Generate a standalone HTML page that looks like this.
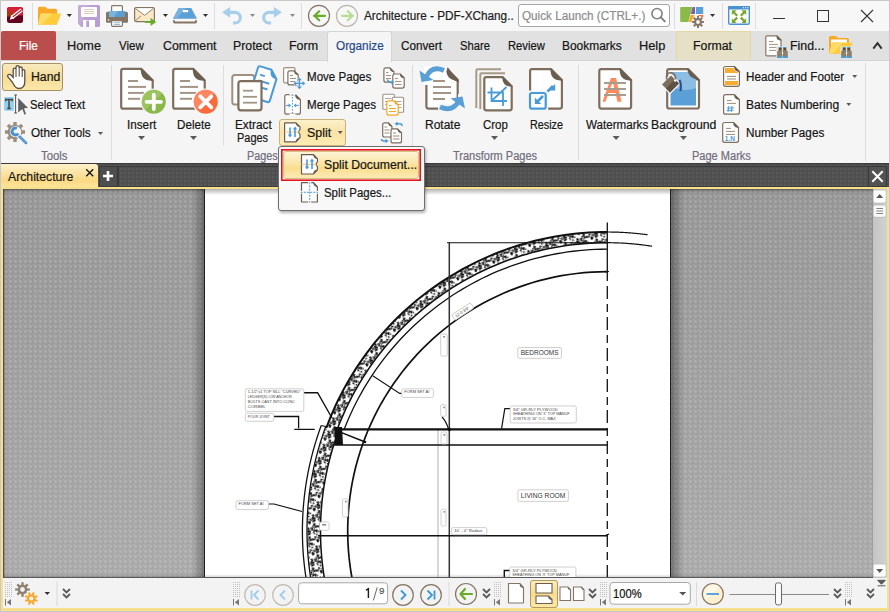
<!DOCTYPE html>
<html><head><meta charset="utf-8">
<style>
*{margin:0;padding:0;box-sizing:border-box}
html,body{width:890px;height:612px;overflow:hidden;background:#f7f7f7}
body{position:relative;font-family:"Liberation Sans",sans-serif;font-size:12px;color:#151515}
.a{position:absolute}
.t{position:absolute;white-space:nowrap;transform-origin:0 0;-webkit-text-stroke:0.2px currentColor}
svg{position:absolute;overflow:visible}
</style></head><body>
<!-- window frame -->
<div class="a" style="left:0;top:0;width:890px;height:612px;border:1px solid #c9c9c9"></div>
<!-- title bar -->
<div class="a" style="left:1px;top:1px;width:888px;height:30px;background:#f7f7f7"></div>
<div class="a" style="left:32px;top:3px;width:1px;height:26px;background:#dedede"></div>
<div class="a" style="left:214px;top:3px;width:1px;height:26px;background:#dedede"></div>
<div class="a" style="left:301px;top:3px;width:1px;height:26px;background:#dedede"></div>
<div class="a" style="left:674px;top:3px;width:1px;height:26px;background:#dedede"></div>
<div class="a" style="left:722px;top:3px;width:1px;height:26px;background:#dedede"></div>
<div class="a" style="left:755px;top:3px;width:1px;height:26px;background:#dedede"></div>
<div class="a" style="left:518px;top:4px;width:152px;height:23px;border:1px solid #a6a6a6;border-radius:3px;background:#fff"></div>
<!-- ribbon tab strip -->
<div class="a" style="left:1px;top:31px;width:888px;height:30px;background:#e1e1e1"></div>
<div class="a" style="left:1px;top:31px;width:55px;height:29px;background:#b94e4c;border-radius:2px 2px 0 0"></div>
<div class="a" style="left:676px;top:31px;width:75px;height:30px;background:#e6e0c6;border:1px solid #e3d7a2;border-bottom:none"></div>
<!-- ribbon body -->
<div class="a" style="left:1px;top:60px;width:888px;height:103px;background:#f5f5f5;border-top:1px solid #d4d4d4"></div>
<div class="a" style="left:327px;top:31px;width:65px;height:31px;background:#f5f5f5;border:1px solid #d4d4d4;border-bottom:none;border-radius:3px 3px 0 0"></div>
<div class="a" style="left:111px;top:65px;width:1px;height:95px;background:#dcdcdc"></div>
<div class="a" style="left:223px;top:65px;width:1px;height:80px;background:#dcdcdc"></div>
<div class="a" style="left:412px;top:65px;width:1px;height:95px;background:#dcdcdc"></div>
<div class="a" style="left:578px;top:65px;width:1px;height:95px;background:#dcdcdc"></div>
<div class="a" style="left:865px;top:63px;width:1px;height:98px;background:#dcdcdc"></div>
<!-- buttons highlighted -->
<div class="a" style="left:2px;top:63px;width:61px;height:28px;border:1px solid #a89060;border-radius:3px;background:linear-gradient(#f8ebc0,#f5dc98 50%,#fbe7a8)"></div>
<div class="a" style="left:279px;top:119px;width:67px;height:27px;border:1px solid #c9b278;border-radius:3px;background:linear-gradient(#fcf1cc,#f9e3a6 50%,#fdecb4)"></div>
<!-- doc tab bar -->
<div class="a" style="left:1px;top:163px;width:888px;height:24px;background-color:#4b4b4b;background-image:radial-gradient(circle at 50% 50%, #555 0, #555 0.8px, transparent 1.8px);background-size:4px 4px;border-top:1px solid #3c3c3c"></div>
<div class="a" style="left:99px;top:166px;width:19px;height:21px;border:1px solid #3a3a3a;background:#4e4e4e"></div>
<div class="a" style="left:118px;top:166px;width:750px;height:21px;border:1px solid #3c3c3c;border-right:none;background-color:#4e4e4e;background-image:radial-gradient(circle at 50% 50%, #585858 0, #585858 0.8px, transparent 1.8px);background-size:4px 4px"></div>
<div class="a" style="left:868px;top:166px;width:19px;height:21px;border:1px solid #3a3a3a;background:#525252"></div>
<div class="a" style="left:1px;top:164px;width:97px;height:25px;border-radius:0 3px 0 0;background:linear-gradient(#fdf1cb,#fbe09a 45%,#fcd983 65%,#fde7a0)"></div>
<!-- yellow frame -->
<div class="a" style="left:1px;top:187px;width:888px;height:2px;background:#f6e08c"></div>
<div class="a" style="left:1px;top:187px;width:2px;height:424px;background:#f6e08c"></div>
<div class="a" style="left:887px;top:187px;width:2px;height:424px;background:#f6e08c"></div>
<div class="a" style="left:1px;top:608px;width:888px;height:3px;background:#f6e08c"></div>
<!-- status bar -->
<div class="a" style="left:3px;top:578px;width:884px;height:30px;background:#f3f3f3"></div>

<div class="a" style="left:3px;top:189px;width:870px;height:389px;background-image:linear-gradient(rgba(0,0,0,.25),transparent 4px),radial-gradient(circle at 50% 50%, rgba(255,255,255,.16) 0, rgba(255,255,255,.16) 1.1px, transparent 2.1px),radial-gradient(circle at 0 0, rgba(255,255,255,.14) 0, rgba(255,255,255,.14) 1.1px, transparent 2.1px),linear-gradient(#939393,#a8a8a8);background-size:100% 100%,5px 5px,5px 5px,100% 100%;box-shadow:inset 1px 0 2px #333"></div>
<div class="a" style="left:192px;top:189px;width:492px;height:389px;background:linear-gradient(90deg,transparent,rgba(0,0,0,.3) 12px,rgba(0,0,0,.3) calc(100% - 12px),transparent)"></div>
<div class="a" style="left:204px;top:189px;width:467px;height:389px;background:#fff;border-left:1px solid #1e1e1e;border-right:1px solid #1e1e1e"></div>
<div class="a" style="left:205px;top:189px;width:465px;height:6px;background:linear-gradient(rgba(0,0,0,.3),transparent)"></div>
<div class="a" style="left:873px;top:189px;width:14px;height:389px;background:linear-gradient(90deg,#c4c4c4,#d2d2d2)"></div>
<div class="a" style="left:3px;top:574px;width:870px;height:3px;background:linear-gradient(transparent,rgba(0,0,0,.15))"></div>
<div class="a" style="left:3px;top:577px;width:870px;height:1px;background:#5a5a5a"></div>

<svg style="left:0;top:0" width="890" height="612" viewBox="0 0 890 612">
<defs><pattern id="hatch" width="14" height="14" patternUnits="userSpaceOnUse" patternTransform="rotate(20)"><g fill="#111"><rect x="3.3" y="7.6" width="1.7" height="1.3" transform="rotate(113 3.3 7.6)"/><rect x="0.9" y="0.2" width="2.7" height="1.0" transform="rotate(42 0.9 0.2)"/><rect x="13.9" y="6.6" width="2.7" height="1.2" transform="rotate(115 13.9 6.6)"/><rect x="2.1" y="8.9" width="2.7" height="1.3" transform="rotate(133 2.1 8.9)"/><rect x="9.4" y="0.9" width="2.5" height="1.3" transform="rotate(54 9.4 0.9)"/><rect x="0.4" y="12.1" width="1.9" height="1.4" transform="rotate(158 0.4 12.1)"/><rect x="10.0" y="12.9" width="1.8" height="1.5" transform="rotate(80 10.0 12.9)"/><rect x="13.1" y="12.3" width="1.2" height="0.9" transform="rotate(39 13.1 12.3)"/><rect x="13.5" y="6.1" width="2.3" height="1.1" transform="rotate(91 13.5 6.1)"/><rect x="5.4" y="4.9" width="2.2" height="1.3" transform="rotate(163 5.4 4.9)"/><rect x="9.5" y="13.0" width="2.7" height="1.7" transform="rotate(121 9.5 13.0)"/><rect x="2.3" y="12.0" width="2.9" height="1.6" transform="rotate(102 2.3 12.0)"/><rect x="10.0" y="3.0" width="2.7" height="1.3" transform="rotate(51 10.0 3.0)"/><rect x="0.9" y="12.0" width="3.0" height="0.9" transform="rotate(144 0.9 12.0)"/><rect x="5.7" y="2.1" width="1.6" height="1.5" transform="rotate(157 5.7 2.1)"/><rect x="0.6" y="8.6" width="1.1" height="1.4" transform="rotate(60 0.6 8.6)"/><rect x="12.3" y="13.7" width="2.0" height="1.7" transform="rotate(56 12.3 13.7)"/><rect x="1.1" y="8.4" width="1.1" height="1.0" transform="rotate(73 1.1 8.4)"/><rect x="8.5" y="2.2" width="1.1" height="1.6" transform="rotate(56 8.5 2.2)"/><rect x="13.4" y="12.6" width="1.8" height="1.2" transform="rotate(94 13.4 12.6)"/><rect x="9.0" y="8.3" width="2.1" height="1.4" transform="rotate(169 9.0 8.3)"/><rect x="7.1" y="6.0" width="2.4" height="1.0" transform="rotate(54 7.1 6.0)"/><rect x="13.7" y="7.3" width="2.1" height="0.8" transform="rotate(75 13.7 7.3)"/><rect x="8.1" y="0.3" width="2.2" height="1.4" transform="rotate(11 8.1 0.3)"/><rect x="8.8" y="6.5" width="2.4" height="1.1" transform="rotate(127 8.8 6.5)"/><rect x="10.3" y="0.3" width="1.1" height="1.4" transform="rotate(173 10.3 0.3)"/><rect x="3.5" y="6.4" width="2.2" height="1.1" transform="rotate(66 3.5 6.4)"/><rect x="4.4" y="5.2" width="2.2" height="1.1" transform="rotate(68 4.4 5.2)"/><rect x="10.8" y="0.4" width="2.1" height="1.5" transform="rotate(56 10.8 0.4)"/><rect x="3.1" y="11.3" width="1.5" height="1.0" transform="rotate(78 3.1 11.3)"/><rect x="9.8" y="1.4" width="1.6" height="1.1" transform="rotate(150 9.8 1.4)"/><rect x="6.1" y="12.0" width="1.3" height="1.1" transform="rotate(117 6.1 12.0)"/><rect x="12.4" y="6.3" width="1.5" height="0.9" transform="rotate(95 12.4 6.3)"/><rect x="2.7" y="11.3" width="2.7" height="1.0" transform="rotate(50 2.7 11.3)"/><rect x="11.3" y="9.0" width="2.6" height="1.1" transform="rotate(23 11.3 9.0)"/><rect x="4.1" y="11.1" width="1.5" height="1.1" transform="rotate(75 4.1 11.1)"/><rect x="5.9" y="5.7" width="2.8" height="0.9" transform="rotate(1 5.9 5.7)"/><rect x="13.2" y="12.3" width="3.0" height="1.2" transform="rotate(171 13.2 12.3)"/><rect x="13.0" y="3.1" width="2.5" height="1.6" transform="rotate(119 13.0 3.1)"/><rect x="7.3" y="4.0" width="1.7" height="1.0" transform="rotate(12 7.3 4.0)"/><rect x="8.2" y="4.0" width="2.6" height="0.8" transform="rotate(163 8.2 4.0)"/><rect x="9.7" y="12.9" width="2.8" height="1.6" transform="rotate(104 9.7 12.9)"/><rect x="0.2" y="10.4" width="1.3" height="1.1" transform="rotate(119 0.2 10.4)"/><rect x="7.3" y="5.8" width="2.9" height="1.4" transform="rotate(61 7.3 5.8)"/><rect x="3.5" y="12.1" width="2.0" height="1.5" transform="rotate(63 3.5 12.1)"/><rect x="2.8" y="7.5" width="2.6" height="1.0" transform="rotate(143 2.8 7.5)"/><rect x="12.9" y="11.3" width="2.6" height="0.8" transform="rotate(113 12.9 11.3)"/><rect x="12.1" y="0.7" width="1.5" height="1.0" transform="rotate(95 12.1 0.7)"/><rect x="5.9" y="6.6" width="2.6" height="0.8" transform="rotate(10 5.9 6.6)"/><rect x="1.8" y="1.7" width="1.1" height="1.7" transform="rotate(154 1.8 1.7)"/></g></pattern></defs>
<defs><clipPath id="pg"><rect x="205" y="189" width="465" height="388"/></clipPath></defs>
<g clip-path="url(#pg)" fill="none" stroke="#111">
<path d="M607.00,232.00 L600.93,232.06 L594.85,232.25 L588.79,232.56 L582.73,232.99 L576.68,233.54 L570.64,234.22 L564.62,235.02 L558.61,235.94 L552.63,236.99 L546.66,238.15 L540.73,239.44 L534.82,240.84 L528.94,242.37 L523.09,244.02 L517.28,245.78 L511.50,247.66 L505.76,249.66 L500.07,251.78 L494.42,254.01 L488.81,256.35 L483.26,258.81 L477.75,261.38 L472.30,264.06 L466.90,266.85 L461.57,269.75 L456.29,272.76 L451.07,275.88 L445.92,279.10 L440.84,282.42 L435.82,285.85 L430.88,289.38 L426.00,293.01 L421.21,296.73 L416.48,300.56 L411.84,304.47 L407.28,308.49 L402.80,312.59 L398.40,316.78 L394.10,321.07 L389.87,325.43 L385.74,329.89 L381.70,334.42 L377.75,339.04 L373.90,343.74 L370.15,348.51 L366.49,353.36 L362.93,358.29 L359.47,363.28 L356.11,368.35 L352.86,373.48 L349.71,378.67 L346.67,383.93 L343.74,389.25 L340.91,394.63 L338.19,400.06 L335.59,405.55 L333.10,411.09 L330.72,416.68 L328.45,422.32 L326.30,428.00 L336.35,431.69 L338.42,426.21 L340.60,420.77 L342.90,415.38 L345.30,410.04 L347.81,404.75 L350.43,399.51 L353.16,394.32 L355.99,389.19 L358.92,384.12 L361.95,379.11 L365.09,374.17 L368.33,369.28 L371.66,364.47 L375.09,359.72 L378.62,355.04 L382.24,350.44 L385.96,345.91 L389.76,341.46 L393.66,337.08 L397.64,332.79 L401.71,328.58 L405.87,324.45 L410.11,320.41 L414.43,316.45 L418.83,312.58 L423.30,308.80 L427.85,305.12 L432.48,301.52 L437.18,298.02 L441.95,294.62 L446.78,291.32 L451.69,288.11 L456.65,285.01 L461.68,282.00 L466.77,279.10 L471.92,276.30 L477.12,273.61 L482.38,271.03 L487.68,268.55 L493.04,266.18 L498.45,263.92 L503.89,261.77 L509.39,259.73 L514.92,257.80 L520.49,255.99 L526.09,254.29 L531.73,252.70 L537.40,251.23 L543.10,249.87 L548.82,248.63 L554.57,247.51 L560.34,246.50 L566.13,245.61 L571.94,244.84 L577.76,244.19 L583.59,243.65 L589.44,243.24 L595.29,242.94 L601.14,242.76 L607.00,242.70 Z" fill="#fff" stroke="none"/>
<path d="M326.35,425.00 L325.41,427.53 L324.49,430.06 L323.60,432.60 L322.72,435.15 L321.87,437.71 L321.05,440.28 L320.24,442.85 L319.46,445.43 L318.71,448.02 L317.97,450.61 L317.26,453.21 L316.57,455.82 L315.91,458.43 L315.27,461.05 L314.65,463.67 L314.06,466.30 L313.49,468.94 L312.94,471.58 L312.42,474.22 L311.92,476.87 L311.45,479.52 L311.00,482.18 L310.57,484.84 L310.17,487.51 L309.79,490.18 L309.44,492.85 L309.10,495.52 L308.80,498.20 L308.52,500.88 L308.26,503.57 L308.02,506.25 L307.81,508.94 L307.63,511.63 L307.46,514.32 L307.33,517.01 L307.21,519.70 L307.12,522.40 L307.06,525.09 L307.02,527.79 L307.00,530.48 L307.01,533.18 L307.04,535.88 L307.10,538.57 L307.18,541.26 L307.28,543.96 L307.41,546.65 L307.56,549.34 L307.74,552.03 L307.94,554.72 L308.16,557.41 L308.41,560.09 L308.69,562.77 L308.98,565.45 L309.31,568.13 L309.65,570.80 L310.02,573.47 L310.42,576.14 L310.83,578.80 L311.27,581.46 L311.74,584.11 L325.03,581.72 L324.58,579.19 L324.16,576.65 L323.76,574.11 L323.39,571.56 L323.03,569.01 L322.70,566.46 L322.40,563.90 L322.11,561.34 L321.85,558.78 L321.61,556.22 L321.40,553.65 L321.20,551.09 L321.04,548.52 L320.89,545.95 L320.77,543.38 L320.67,540.80 L320.59,538.23 L320.54,535.66 L320.51,533.08 L320.50,530.51 L320.52,527.93 L320.56,525.36 L320.62,522.79 L320.70,520.21 L320.81,517.64 L320.94,515.07 L321.10,512.50 L321.28,509.93 L321.48,507.37 L321.70,504.80 L321.95,502.24 L322.22,499.68 L322.51,497.12 L322.83,494.57 L323.16,492.01 L323.53,489.47 L323.91,486.92 L324.32,484.38 L324.75,481.84 L325.20,479.31 L325.68,476.78 L326.18,474.25 L326.70,471.73 L327.24,469.21 L327.81,466.70 L328.40,464.20 L329.01,461.70 L329.64,459.20 L330.30,456.71 L330.98,454.23 L331.68,451.75 L332.40,449.28 L333.15,446.82 L333.91,444.36 L334.70,441.91 L335.52,439.47 L336.35,437.03 L337.20,434.60 L338.08,432.18 L338.98,429.77 Z" fill="#fff" stroke="none"/>
<path d="M607.00,232.50 L600.94,232.56 L594.87,232.75 L588.82,233.05 L582.77,233.49 L576.73,234.04 L570.70,234.72 L564.69,235.51 L558.69,236.43 L552.72,237.48 L546.77,238.64 L540.84,239.92 L534.94,241.33 L529.07,242.85 L523.23,244.50 L517.43,246.26 L511.66,248.14 L505.93,250.13 L500.25,252.24 L494.60,254.47 L489.01,256.81 L483.46,259.26 L477.97,261.83 L472.53,264.51 L467.14,267.29 L461.81,270.19 L456.54,273.19 L451.33,276.30 L446.19,279.52 L441.12,282.84 L436.11,286.26 L431.17,289.78 L426.31,293.40 L421.52,297.12 L416.80,300.94 L412.17,304.85 L407.61,308.86 L403.14,312.95 L398.75,317.14 L394.45,321.42 L390.24,325.78 L386.11,330.22 L382.08,334.75 L378.14,339.36 L374.29,344.05 L370.54,348.82 L366.89,353.66 L363.34,358.58 L359.88,363.56 L356.53,368.62 L353.28,373.74 L350.14,378.93 L347.11,384.18 L344.18,389.49 L341.35,394.86 L338.64,400.28 L336.04,405.76 L333.55,411.29 L331.18,416.87 L328.92,422.50 L326.77,428.17 L335.69,431.44 L337.77,425.95 L339.96,420.50 L342.26,415.10 L344.67,409.75 L347.18,404.44 L349.81,399.19 L352.54,393.99 L355.38,388.85 L358.32,383.77 L361.36,378.74 L364.50,373.79 L367.75,368.89 L371.09,364.06 L374.53,359.31 L378.07,354.62 L381.70,350.00 L385.42,345.46 L389.24,341.00 L393.14,336.61 L397.14,332.31 L401.22,328.09 L405.38,323.95 L409.63,319.89 L413.96,315.93 L418.37,312.05 L422.86,308.26 L427.42,304.57 L432.06,300.97 L436.77,297.46 L441.55,294.05 L446.40,290.74 L451.31,287.52 L456.29,284.41 L461.33,281.40 L466.43,278.49 L471.59,275.69 L476.81,272.99 L482.07,270.40 L487.39,267.91 L492.76,265.54 L498.18,263.27 L503.64,261.11 L509.15,259.07 L514.69,257.14 L520.28,255.32 L525.90,253.61 L531.55,252.02 L537.23,250.55 L542.94,249.19 L548.68,247.95 L554.45,246.82 L560.23,245.81 L566.03,244.92 L571.85,244.14 L577.69,243.49 L583.54,242.95 L589.39,242.54 L595.26,242.24 L601.13,242.06 L607.00,242.00 Z" fill="url(#hatch)" stroke="none"/>
<path d="M326.82,425.18 L325.88,427.70 L324.96,430.23 L324.07,432.77 L323.20,435.31 L322.35,437.87 L321.52,440.43 L320.72,443.00 L319.94,445.57 L319.19,448.16 L318.45,450.74 L317.74,453.34 L317.06,455.94 L316.39,458.55 L315.76,461.17 L315.14,463.78 L314.55,466.41 L313.98,469.04 L313.43,471.68 L312.91,474.32 L312.42,476.96 L311.94,479.61 L311.49,482.26 L311.07,484.92 L310.66,487.58 L310.29,490.25 L309.93,492.91 L309.60,495.58 L309.30,498.26 L309.01,500.93 L308.75,503.61 L308.52,506.29 L308.31,508.98 L308.13,511.66 L307.96,514.35 L307.83,517.03 L307.71,519.72 L307.62,522.41 L307.56,525.10 L307.52,527.79 L307.50,530.49 L307.51,533.18 L307.54,535.87 L307.60,538.56 L307.68,541.25 L307.78,543.94 L307.91,546.62 L308.06,549.31 L308.24,552.00 L308.44,554.68 L308.66,557.36 L308.91,560.04 L309.18,562.72 L309.48,565.39 L309.80,568.07 L310.15,570.73 L310.52,573.40 L310.91,576.06 L311.33,578.72 L311.77,581.38 L312.23,584.03 L324.53,581.81 L324.09,579.27 L323.67,576.73 L323.27,574.18 L322.89,571.63 L322.54,569.08 L322.21,566.52 L321.90,563.96 L321.61,561.39 L321.35,558.83 L321.11,556.26 L320.90,553.69 L320.71,551.12 L320.54,548.55 L320.39,545.97 L320.27,543.40 L320.17,540.82 L320.09,538.24 L320.04,535.66 L320.01,533.09 L320.00,530.51 L320.02,527.93 L320.06,525.35 L320.12,522.77 L320.20,520.19 L320.31,517.62 L320.44,515.04 L320.60,512.47 L320.78,509.90 L320.98,507.32 L321.20,504.76 L321.45,502.19 L321.72,499.62 L322.01,497.06 L322.33,494.50 L322.67,491.95 L323.03,489.39 L323.42,486.84 L323.83,484.30 L324.26,481.75 L324.71,479.22 L325.19,476.68 L325.69,474.15 L326.21,471.63 L326.75,469.11 L327.32,466.59 L327.91,464.08 L328.52,461.57 L329.16,459.08 L329.82,456.58 L330.50,454.09 L331.20,451.61 L331.92,449.14 L332.67,446.67 L333.44,444.21 L334.23,441.75 L335.04,439.31 L335.88,436.87 L336.73,434.43 L337.61,432.01 L338.51,429.59 Z" fill="url(#hatch)" stroke="none"/>
<path d="M607.00,232.00 L600.93,232.06 L594.85,232.25 L588.79,232.56 L582.73,232.99 L576.68,233.54 L570.64,234.22 L564.62,235.02 L558.61,235.94 L552.63,236.99 L546.66,238.15 L540.73,239.44 L534.82,240.84 L528.94,242.37 L523.09,244.02 L517.28,245.78 L511.50,247.66 L505.76,249.66 L500.07,251.78 L494.42,254.01 L488.81,256.35 L483.26,258.81 L477.75,261.38 L472.30,264.06 L466.90,266.85 L461.57,269.75 L456.29,272.76 L451.07,275.88 L445.92,279.10 L440.84,282.42 L435.82,285.85 L430.88,289.38 L426.00,293.01 L421.21,296.73 L416.48,300.56 L411.84,304.47 L407.28,308.49 L402.80,312.59 L398.40,316.78 L394.10,321.07 L389.87,325.43 L385.74,329.89 L381.70,334.42 L377.75,339.04 L373.90,343.74 L370.15,348.51 L366.49,353.36 L362.93,358.29 L359.47,363.28 L356.11,368.35 L352.86,373.48 L349.71,378.67 L346.67,383.93 L343.74,389.25 L340.91,394.63 L338.19,400.06 L335.59,405.55 L333.10,411.09 L330.72,416.68 L328.45,422.32 L326.30,428.00" stroke-width="2"/>
<path d="M607.00,242.70 L601.17,242.76 L595.35,242.94 L589.53,243.23 L583.71,243.64 L577.91,244.17 L572.12,244.82 L566.34,245.58 L560.58,246.46 L554.84,247.46 L549.12,248.57 L543.42,249.80 L537.75,251.14 L532.11,252.60 L526.49,254.17 L520.92,255.85 L515.37,257.65 L509.86,259.56 L504.40,261.58 L498.97,263.70 L493.59,265.94 L488.26,268.29 L482.97,270.74 L477.74,273.30 L472.55,275.97 L467.43,278.74 L462.36,281.61 L457.34,284.59 L452.39,287.66 L447.51,290.84 L442.69,294.11 L437.93,297.48 L433.24,300.94 L428.63,304.50 L424.09,308.15 L419.62,311.90 L415.23,315.73 L410.92,319.65 L406.69,323.66 L402.54,327.75 L398.47,331.92 L394.49,336.18 L390.59,340.51 L386.79,344.93 L383.07,349.42 L379.45,353.98 L375.92,358.61 L372.48,363.32 L369.14,368.10 L365.89,372.94 L362.75,377.84 L359.70,382.81 L356.76,387.84 L353.91,392.93 L351.17,398.07 L348.54,403.27 L346.01,408.52 L343.59,413.82 L341.27,419.17 L339.07,424.56 L336.97,430.00" stroke-width="1.6"/>
<path d="M647.60,234.77 L646.93,234.68 L646.25,234.59 L645.58,234.50 L644.91,234.41 L644.24,234.33 L643.56,234.24 L642.89,234.16 L642.21,234.08 L641.54,234.00 L640.87,233.92 L640.19,233.85 L639.52,233.77 L638.84,233.70 L638.17,233.63 L637.49,233.56 L636.82,233.49 L636.14,233.42 L635.46,233.36 L634.79,233.29 L634.11,233.23 L633.44,233.17 L632.76,233.11 L632.08,233.05 L631.41,233.00 L630.73,232.94 L630.06,232.89 L629.38,232.84 L628.70,232.79 L628.02,232.74 L627.35,232.69 L626.67,232.65 L625.99,232.60 L625.32,232.56 L624.64,232.52 L623.96,232.48 L623.28,232.44 L622.60,232.41 L621.93,232.37 L621.25,232.34 L620.57,232.31 L619.89,232.28 L619.21,232.25 L618.54,232.22 L617.86,232.20 L617.18,232.17 L616.50,232.15 L615.82,232.13 L615.14,232.11 L614.47,232.09 L613.79,232.08 L613.11,232.06 L612.43,232.05 L611.75,232.04 L611.07,232.03 L610.39,232.02 L609.72,232.01 L609.04,232.01 L608.36,232.00 L607.68,232.00 L607.00,232.00" stroke-width="1.2"/>
<path d="M652.20,246.27 L651.45,246.15 L650.71,246.03 L649.96,245.92 L649.21,245.81 L648.46,245.70 L647.71,245.59 L646.96,245.48 L646.21,245.38 L645.46,245.28 L644.71,245.18 L643.96,245.08 L643.21,244.98 L642.46,244.89 L641.71,244.80 L640.96,244.71 L640.21,244.62 L639.46,244.53 L638.71,244.45 L637.95,244.37 L637.20,244.29 L636.45,244.21 L635.70,244.13 L634.94,244.06 L634.19,243.99 L633.44,243.91 L632.69,243.85 L631.93,243.78 L631.18,243.72 L630.42,243.65 L629.67,243.59 L628.92,243.53 L628.16,243.48 L627.41,243.42 L626.65,243.37 L625.90,243.32 L625.14,243.27 L624.39,243.22 L623.63,243.18 L622.88,243.14 L622.12,243.10 L621.37,243.06 L620.61,243.02 L619.86,242.99 L619.10,242.95 L618.34,242.92 L617.59,242.89 L616.83,242.87 L616.08,242.84 L615.32,242.82 L614.56,242.80 L613.81,242.78 L613.05,242.76 L612.29,242.75 L611.54,242.74 L610.78,242.72 L610.03,242.72 L609.27,242.71 L608.51,242.70 L607.76,242.70 L607.00,242.70" stroke-width="1.2"/>
<path d="M607.00,249.20 L601.36,249.26 L595.73,249.43 L590.10,249.71 L584.47,250.10 L578.86,250.61 L573.25,251.23 L567.66,251.96 L562.09,252.80 L556.53,253.76 L551.00,254.82 L545.48,256.00 L539.99,257.28 L534.53,258.68 L529.10,260.18 L523.69,261.80 L518.32,263.52 L512.99,265.34 L507.70,267.28 L502.44,269.32 L497.22,271.46 L492.05,273.71 L486.93,276.06 L481.85,278.51 L476.83,281.07 L471.85,283.72 L466.93,286.47 L462.07,289.33 L457.26,292.27 L452.52,295.32 L447.83,298.45 L443.21,301.69 L438.66,305.01 L434.17,308.42 L429.75,311.92 L425.41,315.51 L421.13,319.19 L416.93,322.95 L412.81,326.79 L408.76,330.72 L404.79,334.73 L400.91,338.81 L397.10,342.97 L393.38,347.21 L389.75,351.52 L386.20,355.90 L382.74,360.35 L379.37,364.87 L376.10,369.46 L372.91,374.11 L369.82,378.83 L366.82,383.60 L363.92,388.44 L361.12,393.33 L358.41,398.28 L355.81,403.28 L353.30,408.33 L350.90,413.43 L348.60,418.57 L346.40,423.77 L344.31,429.00" stroke-width="1.3"/>
<path d="M607.00,271.70 L599.39,271.81 L591.79,272.15 L584.20,272.70 L576.63,273.48 L569.09,274.49 L561.58,275.71 L554.10,277.15 L546.68,278.81 L539.30,280.69 L531.99,282.79 L524.74,285.10 L517.56,287.62 L510.45,290.34 L503.43,293.28 L496.50,296.42 L489.66,299.77 L482.93,303.31 L476.30,307.05 L469.79,310.98 L463.39,315.10 L457.12,319.41 L450.97,323.90 L444.96,328.57 L439.09,333.41 L433.36,338.42 L427.79,343.60 L422.37,348.94 L417.10,354.43 L412.00,360.08 L407.07,365.88 L402.31,371.82 L397.73,377.89 L393.33,384.10 L389.11,390.43 L385.08,396.88 L381.24,403.45 L377.59,410.13 L374.14,416.92 L370.90,423.80 L367.85,430.78 L365.01,437.84 L362.38,444.98 L359.97,452.19 L357.76,459.47 L355.77,466.82 L353.99,474.22 L352.44,481.67 L351.10,489.16 L349.98,496.69 L349.08,504.24 L348.41,511.82 L347.96,519.42 L347.73,527.03 L347.73,534.64 L347.94,542.24 L348.39,549.84 L349.05,557.42 L349.94,564.98 L351.04,572.51 L352.37,580.00" stroke-width="1.7"/>
<path d="M338.98,429.77 L338.08,432.18 L337.20,434.60 L336.35,437.03 L335.52,439.47 L334.70,441.91 L333.91,444.36 L333.15,446.82 L332.40,449.28 L331.68,451.75 L330.98,454.23 L330.30,456.71 L329.64,459.20 L329.01,461.70 L328.40,464.20 L327.81,466.70 L327.24,469.21 L326.70,471.73 L326.18,474.25 L325.68,476.78 L325.20,479.31 L324.75,481.84 L324.32,484.38 L323.91,486.92 L323.53,489.47 L323.16,492.01 L322.83,494.57 L322.51,497.12 L322.22,499.68 L321.95,502.24 L321.70,504.80 L321.48,507.37 L321.28,509.93 L321.10,512.50 L320.94,515.07 L320.81,517.64 L320.70,520.21 L320.62,522.79 L320.56,525.36 L320.52,527.93 L320.50,530.51 L320.51,533.08 L320.54,535.66 L320.59,538.23 L320.67,540.80 L320.77,543.38 L320.89,545.95 L321.04,548.52 L321.20,551.09 L321.40,553.65 L321.61,556.22 L321.85,558.78 L322.11,561.34 L322.40,563.90 L322.70,566.46 L323.03,569.01 L323.39,571.56 L323.76,574.11 L324.16,576.65 L324.58,579.19 L325.03,581.72" stroke-width="1.5"/>
<path d="M325.98,426.00 L325.05,428.51 L324.15,431.03 L323.26,433.56 L322.41,436.10 L321.57,438.64 L320.76,441.19 L319.97,443.75 L319.20,446.32 L318.46,448.89 L317.73,451.47 L317.04,454.05 L316.36,456.65 L315.71,459.24 L315.08,461.85 L314.47,464.45 L313.89,467.07 L313.33,469.69 L312.80,472.31 L312.28,474.94 L311.80,477.57 L311.33,480.21 L310.89,482.85 L310.47,485.49 L310.08,488.14 L309.71,490.79 L309.36,493.45 L309.04,496.11 L308.74,498.77 L308.46,501.43 L308.21,504.10 L307.98,506.77 L307.78,509.44 L307.60,512.11 L307.44,514.78 L307.31,517.46 L307.20,520.13 L307.11,522.81 L307.05,525.49 L307.01,528.16 L307.00,530.84 L307.01,533.52 L307.04,536.20 L307.10,538.87 L307.19,541.55 L307.29,544.23 L307.42,546.90 L307.58,549.57 L307.75,552.24 L307.95,554.92 L308.18,557.58 L308.43,560.25 L308.70,562.91 L309.00,565.57 L309.32,568.23 L309.66,570.89 L310.03,573.54 L310.42,576.19 L310.84,578.84 L311.28,581.48 L311.74,584.11" stroke-width="1.3"/>
<path d="M321.25,425.50 L320.33,428.04 L319.43,430.58 L318.55,433.13 L317.69,435.69 L316.86,438.26 L316.05,440.83 L315.26,443.42 L314.50,446.00 L313.76,448.60 L313.04,451.20 L312.34,453.81 L311.67,456.42 L311.02,459.04 L310.40,461.67 L309.79,464.30 L309.21,466.94 L308.66,469.58 L308.12,472.22 L307.62,474.87 L307.13,477.53 L306.67,480.19 L306.23,482.85 L305.81,485.52 L305.42,488.19 L305.06,490.86 L304.71,493.54 L304.39,496.22 L304.10,498.90 L303.82,501.59 L303.57,504.28 L303.35,506.97 L303.15,509.66 L302.97,512.35 L302.82,515.05 L302.69,517.74 L302.58,520.44 L302.50,523.14 L302.44,525.83 L302.41,528.53 L302.40,531.23 L302.41,533.93 L302.45,536.63 L302.51,539.33 L302.60,542.03 L302.71,544.72 L302.84,547.42 L303.00,550.11 L303.18,552.81 L303.39,555.50 L303.62,558.19 L303.87,560.87 L304.15,563.56 L304.45,566.24 L304.77,568.92 L305.12,571.60 L305.49,574.27 L305.88,576.94 L306.30,579.61 L306.75,582.27 L307.21,584.93" stroke-width="1.3"/>
<path d="M321.3,425.5 L325.8,426.5" stroke-width="1.2"/>
<path d="M447,242.7 H607" stroke-width="1.1"/>
<path d="M449.3,242 V580" stroke="#333" stroke-width="1.5"/>
<path d="M438,430 V580" stroke="#999" stroke-width="0.8"/>
<path d="M607.3,222.6 V281" stroke-width="1.3"/>
<path d="M607.3,286 V580" stroke-width="1.3" stroke-dasharray="13 5 8 5"/>
<path d="M338,429.4 H607" stroke-width="2.1"/>
<path d="M330.5,445.1 H607" stroke-width="1.5"/>
<path d="M318,535.7 H607" stroke-width="1.6"/>
<path d="M605,272 L609,271.5 M605,535.7 L609,534 M447,429.4 L451,429.4" stroke-width="1.2"/>
<path d="M334.5,427 H342 L343,445 H335 Z" fill="#111" stroke="none"/>
<path d="M338.4,431.4 L364.5,441.8" stroke-width="1.5"/>
<circle cx="365" cy="442" r="1.3" fill="#111" stroke="none"/>
<circle cx="449.3" cy="429.4" r="1.8" fill="#111" stroke="none"/>
<path d="M303.8,392.7 H317.6 L332,418" stroke-width="1.4"/>
<path d="M273.8,416.5 H298.6 V428.2 M294.3,429.4 H314.7" stroke-width="1.3"/>
<path d="M372.7,375.8 L399.7,393.4 H401.8" stroke-width="1.1"/>
<path d="M268.4,504 H274 L302,511.5" stroke-width="1.2"/>
<path d="M511.6,408.7 H504.8 L501.6,428.4" stroke-width="1.2"/>
<path d="M442,417 Q446,421 448.5,429" stroke-width="1.1"/>
<path d="M504.3,580 V570.5 H509.8" stroke-width="1.4"/>
</g>
<g clip-path="url(#pg)"><rect x="245.3" y="388.8" width="58.5" height="22.6" rx="1.5" fill="#fff" stroke="#c4c4c4" stroke-width="0.8"/><text x="247.8" y="393.4" font-family="Liberation Sans" font-size="4" fill="#444" textLength="53" lengthAdjust="spacingAndGlyphs">1-1/2"x1 TOP SILL "CURVED"</text><text x="247.8" y="398.1" font-family="Liberation Sans" font-size="4" fill="#444" textLength="44" lengthAdjust="spacingAndGlyphs">LEDGER(S) C/W ANCHOR</text><text x="247.8" y="402.8" font-family="Liberation Sans" font-size="4" fill="#444" textLength="47" lengthAdjust="spacingAndGlyphs">BOLTS CAST INTO CONC</text><text x="247.8" y="407.5" font-family="Liberation Sans" font-size="4" fill="#444" textLength="18" lengthAdjust="spacingAndGlyphs">CORBEL</text>
<rect x="245.3" y="413.3" width="28.5" height="8.0" rx="1.5" fill="#fff" stroke="#c4c4c4" stroke-width="0.8"/><text x="247.8" y="417.9" font-family="Liberation Sans" font-size="4" fill="#444" textLength="22" lengthAdjust="spacingAndGlyphs">POUR JOINT</text>
<rect x="401.8" y="388.8" width="31.6" height="8.6" rx="1.5" fill="#fff" stroke="#c4c4c4" stroke-width="0.8"/><text x="404.3" y="393.4" font-family="Liberation Sans" font-size="4" fill="#444" textLength="25" lengthAdjust="spacingAndGlyphs">FORM SET AI</text>
<rect x="236" y="500.7" width="32.4" height="8.9" rx="1.5" fill="#fff" stroke="#c4c4c4" stroke-width="0.8"/><text x="238.5" y="505.3" font-family="Liberation Sans" font-size="4" fill="#444" textLength="25" lengthAdjust="spacingAndGlyphs">FORM SET AI</text>
<rect x="517.8" y="347.5" width="43.7" height="10.8" rx="1.5" fill="#fff" stroke="#c4c4c4" stroke-width="0.8"/><text x="539.6" y="355.2" font-family="Liberation Sans" font-size="6.5" text-anchor="middle" fill="#333" textLength="37.7" lengthAdjust="spacingAndGlyphs">BEDROOMS</text>
<rect x="517.9" y="489.8" width="50.5" height="11.6" rx="1.5" fill="#fff" stroke="#c4c4c4" stroke-width="0.8"/><text x="543.1" y="497.9" font-family="Liberation Sans" font-size="6.5" text-anchor="middle" fill="#333" textLength="44.5" lengthAdjust="spacingAndGlyphs">LIVING ROOM</text>
<rect x="510.2" y="406" width="66.1" height="17.0" rx="1.5" fill="#fff" stroke="#c4c4c4" stroke-width="0.8"/><text x="512.7" y="410.6" font-family="Liberation Sans" font-size="4" fill="#444" textLength="45" lengthAdjust="spacingAndGlyphs">3/4" GR-RLY PLYWOOD</text><text x="512.7" y="415.3" font-family="Liberation Sans" font-size="4" fill="#444" textLength="57" lengthAdjust="spacingAndGlyphs">SHEATHING ON 'X' TOP MANUF</text><text x="512.7" y="420.0" font-family="Liberation Sans" font-size="4" fill="#444" textLength="43" lengthAdjust="spacingAndGlyphs">JOISTS @ 16" O.C. MAX</text>
<rect x="509.8" y="567" width="66.1" height="23.0" rx="1.5" fill="#fff" stroke="#c4c4c4" stroke-width="0.8"/><text x="512.3" y="571.6" font-family="Liberation Sans" font-size="4" fill="#444" textLength="45" lengthAdjust="spacingAndGlyphs">3/4" GR-RLY PLYWOOD</text><text x="512.3" y="576.3" font-family="Liberation Sans" font-size="4" fill="#444" textLength="57" lengthAdjust="spacingAndGlyphs">SHEATHING ON 'X' TOP MANUF</text>
<rect x="451.7" y="527.6" width="35.2" height="7.1" rx="1.5" fill="#fff" stroke="#c4c4c4" stroke-width="0.8"/><text x="454.2" y="532.2" font-family="Liberation Sans" font-size="4" fill="#444" textLength="28" lengthAdjust="spacingAndGlyphs">10' - 0" Radius</text>
<rect x="440.7" y="334" width="6.5" height="22.2" rx="1.5" fill="#fff" stroke="#c4c4c4" stroke-width="0.8"/><rect x="443.2" y="336.0" width="1.8" height="1.6" fill="#8a8a8a"/>
<rect x="440.7" y="404.6" width="5.3" height="11.7" rx="1.5" fill="#fff" stroke="#c4c4c4" stroke-width="0.8"/><rect x="443.2" y="406.6" width="1.6" height="1.6" fill="#8a8a8a"/>
<rect x="441" y="432" width="6.0" height="12.0" rx="1.5" fill="#fff" stroke="#c4c4c4" stroke-width="0.8"/><rect x="443.5" y="434.0" width="1.8" height="1.6" fill="#8a8a8a"/>
<rect x="441" y="509" width="5.0" height="17.0" rx="1.5" fill="#fff" stroke="#c4c4c4" stroke-width="0.8"/><rect x="443.5" y="511.0" width="1.6" height="1.6" fill="#8a8a8a"/>
<rect x="342.5" y="498.8" width="5.5" height="18.1" rx="1.5" fill="#fff" stroke="#c4c4c4" stroke-width="0.8"/><rect x="345.0" y="500.8" width="1.6" height="1.6" fill="#8a8a8a"/>
<rect x="319.6" y="522" width="9.4" height="8.3" rx="1.5" fill="#fff" stroke="#c4c4c4" stroke-width="0.8"/><rect x="322.1" y="524.0" width="4" height="1.6" fill="#8a8a8a"/>
<g transform="rotate(-33 462.7 311.5)"><rect x="451.5" y="308.3" width="22.5" height="6.4" rx="1.5" fill="#fff" stroke="#c4c4c4" stroke-width="0.8"/><text x="454.0" y="312.9" font-family="Liberation Sans" font-size="4" fill="#444" textLength="16" lengthAdjust="spacingAndGlyphs">12'-0 3/8"</text></g></g>
</svg>
<svg style="left:0;top:0" width="890" height="62" viewBox="0 0 890 62">
<!-- app icon -->
<rect x="7" y="7" width="16" height="16" rx="2.5" fill="#640020"/>
<path d="M7,15.5 V9.5 Q7,7 9.5,7 H20.5 Q23,7 23,9.5 V15.5 Z" fill="#d42030"/>
<rect x="7" y="12" width="6" height="4.5" fill="#a33a0c"/>
<path d="M12,17.5 L21.5,10" stroke="#fff" stroke-width="3.6" stroke-linecap="butt"/>
<path d="M12.3,17.3 L21.3,10.2" stroke="#c02030" stroke-width="1.2"/>
<path d="M9.8,19.8 L11.2,15.3 L14.3,18.3 Z" fill="#fff"/>
<!-- folder -->
<path d="M38,8.3 Q38,6.8 39.5,6.8 H45.3 L47.3,8.8 H55.5 Q57,8.8 57,10.3 V24.6 H38 Z" fill="#f8a925"/>
<path d="M40.6,13.6 H61.2 L57,24.6 H38 Z" fill="#ffcd3c"/>
<path d="M40.6,13.6 H52.5 L41.5,24.6 H38 Z" fill="#ffdc6a"/>
<path d="M66.7,14 H72 L69.35,17 Z" fill="#303030"/>
<!-- save -->
<path d="M78,6.5 Q78,5 79.5,5 H98.5 Q100,5 100,6.5 V25.5 Q100,27 98.5,27 H81.5 L78,23.5 Z" fill="#b99ed2"/>
<path d="M78,6.5 Q78,5 79.5,5 H90 L80,27 H81.5 L78,23.5Z" fill="#c6b0dc" opacity=".7"/>
<rect x="81" y="7" width="16" height="10" rx="1" fill="#fff"/>
<path d="M84,9.5 H94 M84,11.5 H94 M84,13.5 H94" stroke="#d6cbb5" stroke-width="0.9"/>
<rect x="83" y="20" width="12" height="7" fill="#fff"/>
<rect x="86.3" y="20.6" width="2.8" height="6.4" fill="#b99ed2"/>
<!-- printer -->
<rect x="111.6" y="5.6" width="10.8" height="7" rx="1" fill="#fff" stroke="#857565" stroke-width="1.2"/>
<path d="M106,13.5 Q106,11.8 107.5,11.8 H126.5 Q128,11.8 128,13.5 V21.5 Q128,22.8 126.7,22.8 H107.3 Q106,22.8 106,21.5 Z" fill="#857565"/>
<rect x="109" y="11" width="16" height="6" fill="#5a9fd4"/>
<path d="M109,11 H118 L114,17 H109Z" fill="#7ab3e0"/>
<circle cx="108.5" cy="20" r="0.8" fill="#fff"/>
<rect x="111.6" y="20.7" width="10.8" height="5.6" rx="1" fill="#fff" stroke="#857565" stroke-width="1.2"/>
<path d="M114,22.8 H120 M114,24.6 H120" stroke="#7ab0d0" stroke-width="0.9"/>
<!-- envelope -->
<rect x="134.6" y="7.6" width="19.8" height="14" rx="1.5" fill="#fbe9c6" stroke="#857565" stroke-width="1.2"/>
<path d="M135.3,8.3 L144.5,15.3 L153.7,8.3 Z" fill="#fff"/>
<path d="M135.3,8.3 L144.5,15.3 L153.7,8.3 M135.3,20.9 L141,15.8" stroke="#857565" stroke-width="0.9" fill="none"/>
<path d="M145,21.9 H153" stroke="#fff" stroke-width="4"/>
<path d="M145,21.9 H152.5" stroke="#6aab2b" stroke-width="2.2"/>
<path d="M150.5,17.8 L156.2,21.9 L150.5,26 Z" fill="#6aab2b"/>
<path d="M162.9,14 H168 L165.45,17 Z" fill="#303030"/>
<!-- scanner -->
<path d="M178.7,8 H191.3 L197,18.8 H173 Z" fill="#5ba0d6"/>
<path d="M178.7,8 H186 L176.5,18.8 H173 Z" fill="#78b2e0"/>
<rect x="182.8" y="10" width="5.4" height="2.2" fill="#fff"/>
<path d="M174,20.3 V21.4 Q174,22.6 175.2,22.6 H194.8 Q196,22.6 196,21.4 V20.3" stroke="#857565" stroke-width="2" fill="none"/>
<path d="M203,14 H208 L205.5,17 Z" fill="#303030"/>
<!-- undo/redo -->
<g id="undo">
<path d="M227,12.3 H235 A5.35,5.35 0 0 1 235,23 H233" stroke="#a8cfe9" stroke-width="3.2" fill="none"/>
<path d="M222.1,12.3 L230.1,7 V17.8 Z" fill="#a8cfe9"/>
</g>
<use href="#undo" transform="translate(504,0) scale(-1,1)"/>
<path d="M250,14 H255 L252.5,17 Z" fill="#8a8a8a"/>
<path d="M290,14 H295 L292.5,17 Z" fill="#8a8a8a"/>
<!-- nav -->
<circle cx="319" cy="15.8" r="10.5" fill="none" stroke="#857565" stroke-width="1.2"/>
<path d="M314,15.8 H325 M319.2,11.3 L314.5,15.8 L319.2,20.3" stroke="#6aab2b" stroke-width="2.2" fill="none" stroke-linecap="round" stroke-linejoin="round"/>
<circle cx="347" cy="15.8" r="10.5" fill="none" stroke="#bdb5ad" stroke-width="1.2"/>
<path d="M342,15.8 H353 M347.8,11.3 L352.5,15.8 L347.8,20.3" stroke="#b9dc94" stroke-width="2.2" fill="none" stroke-linecap="round" stroke-linejoin="round"/>
<!-- search -->
<circle cx="657" cy="13.6" r="5.1" fill="none" stroke="#808080" stroke-width="1.6"/>
<path d="M660.8,17.4 L664.8,21.4" stroke="#808080" stroke-width="2" stroke-linecap="round"/>
<!-- colors icon -->
<path d="M680.2,8 Q680.2,7 681.2,7 H692.3 L688.4,22 H681.2 Q680.2,22 680.2,21 Z" fill="#8cba4a"/>
<path d="M692.6,7 H695 V14 H690.8 Z" fill="#7b5ea8"/>
<rect x="696" y="7" width="7.2" height="7" fill="#5aa0d6"/>
<path d="M690.6,15 H694.5 L692.5,22 H688.8 Z" fill="#f6a82a"/>
<rect x="698.2" y="15" width="5" height="2.5" fill="#f36f43"/>
<circle cx="698" cy="22" r="6.3" fill="#f7f7f7"/>
<path d="M701.90,21.10 L703.91,20.97 L703.91,23.03 L701.90,22.90 L701.39,24.12 L702.91,25.45 L701.45,26.91 L700.12,25.39 L698.90,25.90 L699.03,27.91 L696.97,27.91 L697.10,25.90 L695.88,25.39 L694.55,26.91 L693.09,25.45 L694.61,24.12 L694.10,22.90 L692.09,23.03 L692.09,20.97 L694.10,21.10 L694.61,19.88 L693.09,18.55 L694.55,17.09 L695.88,18.61 L697.10,18.10 L696.97,16.09 L699.03,16.09 L698.90,18.10 L700.12,18.61 L701.45,17.09 L702.91,18.55 L701.39,19.88 Z M699.9,22 A1.9,1.9 0 1 0 696.1,22 A1.9,1.9 0 1 0 699.9,22 Z" fill="#857565" fill-rule="evenodd"/>
<path d="M710,14 H715 L712.5,17 Z" fill="#303030"/>
<!-- fullscreen -->
<rect x="728.7" y="6.7" width="20.6" height="17.6" rx="1.5" fill="#fff" stroke="#4b92d2" stroke-width="1.4"/>
<rect x="728" y="6" width="22" height="3.4" rx="1" fill="#4b92d2"/>
<circle cx="743.5" cy="7.7" r=".6" fill="#fff"/><circle cx="745.6" cy="7.7" r=".6" fill="#fff"/><circle cx="747.7" cy="7.7" r=".6" fill="#fff"/>
<g fill="#77a630" stroke="#77a630">
<path d="M731.8,10.3 H736.6 L731.8,15.1 Z" stroke="none"/><path d="M733,11.5 L737.2,15.7" stroke-width="2.3"/>
<path d="M746.2,10.3 H741.4 L746.2,15.1 Z" stroke="none"/><path d="M745,11.5 L740.8,15.7" stroke-width="2.3"/>
<path d="M731.8,23 H736.6 L731.8,18.2 Z" stroke="none"/><path d="M733,21.8 L737.2,17.6" stroke-width="2.3"/>
<path d="M746.2,23 H741.4 L746.2,18.2 Z" stroke="none"/><path d="M745,21.8 L740.8,17.6" stroke-width="2.3"/>
</g>
<!-- window controls -->
<path d="M773,18.5 H785" stroke="#333" stroke-width="1"/>
<rect x="817.5" y="10.5" width="11" height="11" fill="none" stroke="#333" stroke-width="1"/>
<path d="M861,10 L873,22 M873,10 L861,22" stroke="#333" stroke-width="1.1"/>
<!-- find icon -->
<path d="M766.8,35.8 H777 L781,40 V54.8 Q781,55.8 780,55.8 H766.8 Q765.8,55.8 765.8,54.8 V36.8 Q765.8,35.8 766.8,35.8 Z" fill="#fff" stroke="#857565" stroke-width="1.2"/>
<path d="M776.6,35.2 L781.6,40.3 Q775.9,41 776.6,35.2 Z" fill="#6b5d4f"/>
<path d="M769,41.5 H773.5 M769,44.4 H778 M769,47.4 H778 M769,50.4 H776" stroke="#a39585" stroke-width="1"/>
<g id="binoc">
<path d="M776.3,46.5 H788.7 V58.5 H776.3 Z" fill="#e1e1e1"/>
<path d="M778.8,47.6 H781.6 V50.5 L782.2,51 V57.4 H777.2 V51.5 L778.8,50 Z" fill="#8c7f6c"/>
<path d="M783.4,47.6 H786.2 V50 L787.8,51.5 V57.4 H782.8 V51 L783.4,50.5 Z" fill="#8c7f6c"/>
<path d="M778.8,47.6 H781.6 V50.3 H778.8 Z M783.4,47.6 H786.2 V50.3 H783.4 Z" fill="#5a4a38"/>
<path d="M778.8,47.2 H781.6 V48.1 H778.8 Z M783.4,47.2 H786.2 V48.1 H783.4 Z" fill="#3fa3e0"/>
<path d="M777.2,56.6 H782.2 V57.9 H777.2 Z M782.8,56.6 H787.8 V57.9 H782.8 Z" fill="#3fa3e0"/>
<path d="M781.9,52 H783.1 V54 H781.9Z" fill="#fff"/>
</g>
<!-- folder find -->
<path d="M829,37.5 Q829,36 830.5,36 H836 L838,38 H847.5 Q849,38 849,39.5 V53.6 H829 Z" fill="#f8a925"/>
<rect x="831" y="39.5" width="16" height="12" fill="#fff"/>
<path d="M832,42.6 H852.5 L848.5,53.6 H829 Z" fill="#ffcd3c"/>
<path d="M832,42.6 H843 L833,53.6 H829 Z" fill="#ffdc6a"/>
<use href="#binoc" transform="translate(64,0)"/>
<path d="M873.3,48.6 L877.5,43.2 L881.7,48.6" stroke="#333" stroke-width="2" fill="none"/>
</svg>
<svg style="left:0;top:0" width="890" height="163" viewBox="0 0 890 163">
<path d="M12.6,82.5 L8.2,77.2 Q7,75.6 8.4,74.6 Q9.8,73.8 11.2,75.2 L13.2,77.3 V69.8 Q13.2,68.2 14.6,68.2 Q16,68.2 16,69.8 V67.4 Q16,65.6 17.6,65.6 Q19.2,65.6 19.2,67.4 V68.6 Q19.2,67 20.7,67 Q22.2,67 22.2,68.6 V71 Q22.2,69.6 23.5,69.6 Q24.8,69.6 24.8,71 V81.8 Q24.8,88.5 18.7,88.5 Q15.3,88.5 12.6,82.5 Z" fill="#fff" stroke="#5e5040" stroke-width="1.3"/>
<path d="M16,69.8 V77 M19.2,68.6 V76.5 M22.2,71 V77" stroke="#5e5040" stroke-width="1.1"/>
<rect x="4.1" y="96.9" width="9.8" height="13.8" rx="1" fill="#8fd0f2"/>
<path d="M5.8,101.2 V99.4 H12.2 V101.2 M9,99.4 V108.6 M7.2,108.6 H10.8" stroke="#4e4238" stroke-width="1.5" fill="none"/>
<path d="M15.6,95 V113 M14.2,95 H17 M14.2,113 H17" stroke="#555" stroke-width="1"/>
<path d="M18.2,98 L28,108 L24,108.2 L26,114 L24.5,114.8 L22.3,109 L18.2,112.5 Z" fill="#5f5f5f"/>
<path d="M22.21,130.33 L25.05,130.25 L25.05,133.75 L22.21,133.67 L21.28,135.92 L23.35,137.87 L20.87,140.35 L18.92,138.28 L16.67,139.21 L16.75,142.05 L13.25,142.05 L13.33,139.21 L11.08,138.28 L9.13,140.35 L6.65,137.87 L8.72,135.92 L7.79,133.67 L4.95,133.75 L4.95,130.25 L7.79,130.33 L8.72,128.08 L6.65,126.13 L9.13,123.65 L11.08,125.72 L13.33,124.79 L13.25,121.95 L16.75,121.95 L16.67,124.79 L18.92,125.72 L20.87,123.65 L23.35,126.13 L21.28,128.08 Z M20.0,132 A5.0,5.0 0 1 0 10.0,132 A5.0,5.0 0 1 0 20.0,132 Z" fill="#9a8f7f" fill-rule="evenodd"/>
<path d="M16.5,133.5 L26.5,143.5" stroke="#f5f5f5" stroke-width="5"/>
<path d="M17,134 L26,143" stroke="#4a90d0" stroke-width="2.6" stroke-linecap="round"/>
<path d="M17,134 L26,143" stroke="#9cc6ec" stroke-width="0.9" stroke-dasharray="1 1"/>
<circle cx="15.6" cy="131.6" r="5.6" fill="#f5f5f5"/>
<path d="M16.9,128.4 A3.4,3.4 0 1 0 18.2,133.5" stroke="#4a90d0" stroke-width="2.9" fill="none"/>
<path d="M98,132 H103 L100.5,135 Z" fill="#5a5a5a"/>
<path d="M123.19999999999999,68.89999999999999 H141.2 L152.7,80.39999999999999 V106.69999999999999 Q152.7,108.69999999999999 150.7,108.69999999999999 H123.19999999999999 Q121.19999999999999,108.69999999999999 121.19999999999999,106.69999999999999 V70.89999999999999 Q121.19999999999999,68.89999999999999 123.19999999999999,68.89999999999999 Z" fill="#fff" stroke="#7d6e5e" stroke-width="2.2" stroke-linejoin="round"/><path d="M140.86999999999998,67.8 L153.79999999999998,80.72999999999999 Q139.82,81.77999999999999 140.86999999999998,67.8 Z" fill="#6b5d4f"/>
<path d="M128,81 H138" stroke="#a39585" stroke-width="2"/><path d="M128,86.9 H146" stroke="#a39585" stroke-width="2"/><path d="M128,92.9 H144" stroke="#a39585" stroke-width="2"/><path d="M128,98.8 H140" stroke="#a39585" stroke-width="2"/>
<circle cx="153.8" cy="101.8" r="13.3" fill="#f5f5f5"/>
<circle cx="153.8" cy="101.8" r="12" fill="#8bb84a"/>
<path d="M145.3,110.3 A12,12 0 0 1 162.3,93.3 Z" fill="#a6cc6c" opacity=".6"/>
<path d="M146.60000000000002,101.8 H161.0 M153.8,94.6 V109.0" stroke="#fff" stroke-width="3.8" stroke-linecap="round"/>
<path d="M138,136 H145 L141.5,140 Z" fill="#5a5a5a"/>
<path d="M175.2,68.89999999999999 H193.2 L204.7,80.39999999999999 V106.69999999999999 Q204.7,108.69999999999999 202.7,108.69999999999999 H175.2 Q173.2,108.69999999999999 173.2,106.69999999999999 V70.89999999999999 Q173.2,68.89999999999999 175.2,68.89999999999999 Z" fill="#fff" stroke="#7d6e5e" stroke-width="2.2" stroke-linejoin="round"/><path d="M192.86999999999998,67.8 L205.79999999999998,80.72999999999999 Q191.82,81.77999999999999 192.86999999999998,67.8 Z" fill="#6b5d4f"/>
<path d="M180,81 H190" stroke="#a39585" stroke-width="2"/><path d="M180,86.9 H198" stroke="#a39585" stroke-width="2"/><path d="M180,92.9 H196" stroke="#a39585" stroke-width="2"/><path d="M180,98.8 H192" stroke="#a39585" stroke-width="2"/>
<circle cx="205.8" cy="101.8" r="13.3" fill="#f5f5f5"/>
<circle cx="205.8" cy="101.8" r="12" fill="#fa6a3a"/>
<path d="M197.3,110.3 A12,12 0 0 1 214.3,93.3 Z" fill="#ff9a78" opacity=".6"/>
<path d="M200.3,96.3 L211.3,107.3 M211.3,96.3 L200.3,107.3" stroke="#fff" stroke-width="3.8" stroke-linecap="round"/>
<path d="M190,136 H197 L193.5,140 Z" fill="#5a5a5a"/>
<rect x="232.3" y="74.9" width="22" height="29.7" rx="2.5" fill="#fff" stroke="#a09080" stroke-width="2"/>
<g transform="rotate(17 265 84)"><path d="M255.5,68.5 H267.0 L274.5,76.0 V98.5 Q274.5,100.5 272.5,100.5 H255.5 Q253.5,100.5 253.5,98.5 V70.5 Q253.5,68.5 255.5,68.5 Z" fill="#fff" stroke="#4a9ad8" stroke-width="2" stroke-linejoin="round"/><path d="M266.7,67.5 L275.5,76.3 Q266.1,76.9 266.7,67.5 Z" fill="#4a9ad8"/><path d="M257.5,76.5 H262.5" stroke="#4a9ad8" stroke-width="2"/><path d="M257.5,82.5 H269" stroke="#4a9ad8" stroke-width="2"/><path d="M257.5,88.5 H269" stroke="#4a9ad8" stroke-width="2"/></g>
<path d="M240.9,81.19999999999999 H261.5 L261.5,81.19999999999999 V107.79999999999998 Q261.5,110.29999999999998 259.0,110.29999999999998 H240.9 Q238.4,110.29999999999998 238.4,107.79999999999998 V83.69999999999999 Q238.4,81.19999999999999 240.9,81.19999999999999 Z" fill="#fff" stroke="#7d6e5e" stroke-width="2.2" stroke-linejoin="round"/>
<path d="M243,90.7 H253" stroke="#a39585" stroke-width="1.8"/><path d="M243,96.8 H257" stroke="#a39585" stroke-width="1.8"/><path d="M243,102.7 H257" stroke="#a39585" stroke-width="1.8"/>
<rect x="283.6" y="67.6" width="11.4" height="15.2" rx="1.2" fill="#fff" stroke="#a09080" stroke-width="1.2"/>
<path d="M289.90000000000003,70.8 H294.20000000000005 L298.20000000000005,74.8 V82.9 Q298.20000000000005,84.9 296.20000000000005,84.9 H289.90000000000003 Q287.90000000000003,84.9 287.90000000000003,82.9 V72.8 Q287.90000000000003,70.8 289.90000000000003,70.8 Z" fill="#fff" stroke="#7d6e5e" stroke-width="1.2" stroke-linejoin="round"/><path d="M294.02000000000004,70.2 L298.80000000000007,74.98 Q293.72,75.28 294.02000000000004,70.2 Z" fill="#6b5d4f"/>
<path d="M290,75.5 H293" stroke="#a39585" stroke-width="1.1"/><path d="M290,78.5 H296" stroke="#a39585" stroke-width="1.1"/><path d="M290,81.5 H295" stroke="#a39585" stroke-width="1.1"/>
<path d="M294,83.4 H305 M299.4,78 V89" stroke="#f5f5f5" stroke-width="3"/>
<path d="M295,83.4 H304 M299.4,79 V88" stroke="#4a9ad8" stroke-width="1.4"/>
<path d="M293.5,83.4 L296.2,81 V85.8Z M305.3,83.4 L302.6,81 V85.8Z M299.4,77.5 L297,80.2 H301.8Z M299.4,89.3 L297,86.6 H301.8Z" fill="#4a9ad8"/>
<path d="M286.8,94.6 H295.40000000000003 L300.40000000000003,99.6 V112.19999999999999 Q300.40000000000003,114.19999999999999 298.40000000000003,114.19999999999999 H286.8 Q284.8,114.19999999999999 284.8,112.19999999999999 V96.6 Q284.8,94.6 286.8,94.6 Z" fill="#fff" stroke="#7d6e5e" stroke-width="1.2" stroke-linejoin="round"/><path d="M295.22,94.0 L301.00000000000006,99.78 Q294.8,100.19999999999999 295.22,94.0 Z" fill="#6b5d4f"/>
<path d="M289.5,94 H295.5 M289.5,114.8 H295.5" stroke="#fff" stroke-width="2"/>
<path d="M292.4,94 V115" stroke="#4a9ad8" stroke-width="1" stroke-dasharray="1.6 1.4"/>
<path d="M286,105.4 H290.5 M294.5,105.4 H299" stroke="#4a9ad8" stroke-width="1"/>
<path d="M291,105.4 L288.6,103.3 V107.5Z M293.8,105.4 L296.2,103.3 V107.5Z" fill="#4a9ad8"/>
<path d="M285,122.8 H296 L300,127 V129.5 L298.3,132 L300,134.5 V137.5 L296,141.9 H285 Q284.6,141.9 284.6,141.5 V123.2 Q284.6,122.8 285,122.8 Z" fill="#fff" stroke="#6b5d4f" stroke-width="1.2"/>
<path d="M295.5,122.5 L300.4,127 Q297,127 296,124.5Z M295.5,142.2 L300.4,137.5 Q297,137.5 296,140Z" fill="#6b5d4f"/>
<path d="M284.6,132 H299" stroke="#f5c98a" stroke-width="1.2" opacity=".8"/>
<path d="M290,127.5 V136 M295,128.5 V137" stroke="#4a9ad8" stroke-width="1.6"/>
<path d="M287.8,134.5 H292.2 L290,137.5Z M292.8,129.5 H297.2 L295,126.5Z" fill="#4a9ad8"/>
<path d="M337.7,131 H342.7 L340.2,134 Z" fill="#5a5a5a"/>
<path d="M385.90000000000003,67.8 H389.90000000000003 L393.90000000000003,71.8 V80.2 Q393.90000000000003,82.2 391.90000000000003,82.2 H385.90000000000003 Q383.90000000000003,82.2 383.90000000000003,80.2 V69.8 Q383.90000000000003,67.8 385.90000000000003,67.8 Z" fill="#fff" stroke="#7d6e5e" stroke-width="1.2" stroke-linejoin="round"/><path d="M389.72,67.2 L394.50000000000006,71.98 Q389.42,72.28 389.72,67.2 Z" fill="#6b5d4f"/>
<path d="M386,72.5 H388.5" stroke="#a39585" stroke-width="1.1"/><path d="M386,75.5 H391" stroke="#a39585" stroke-width="1.1"/><path d="M386,78.5 H391" stroke="#a39585" stroke-width="1.1"/>
<path d="M394.8,74.0 H400.2 L404.2,78.0 V86.1 Q404.2,88.1 402.2,88.1 H394.8 Q392.8,88.1 392.8,86.1 V76.0 Q392.8,74.0 394.8,74.0 Z" fill="#fff" stroke="#7d6e5e" stroke-width="1.2" stroke-linejoin="round"/><path d="M400.02,73.4 L404.8,78.18 Q399.71999999999997,78.48 400.02,73.4 Z" fill="#6b5d4f"/>
<path d="M395,78.5 H398" stroke="#a39585" stroke-width="1.1"/><path d="M395,81.5 H401.5" stroke="#a39585" stroke-width="1.1"/><path d="M395,84.5 H401.5" stroke="#a39585" stroke-width="1.1"/>
<path d="M387.2,79.5 Q388.5,82.5 392,82.5" stroke="#4a9ad8" stroke-width="1.6" fill="none"/><path d="M391.5,80.3 L394.2,82.5 L391.5,84.7Z" fill="#4a9ad8"/>
<rect x="382.8" y="94.3" width="11.6" height="15" rx="1" fill="#fff" stroke="#a09080" stroke-width="1.1"/>
<rect x="392.2" y="97.3" width="11.4" height="15" rx="1" fill="#fff" stroke="#a09080" stroke-width="1.1"/>
<path d="M385,98.5 H391" stroke="#b5a898" stroke-width="1"/><path d="M385,101.5 H391" stroke="#b5a898" stroke-width="1"/><path d="M385,104.5 H391" stroke="#b5a898" stroke-width="1"/>
<path d="M395,101.5 H401.5" stroke="#b5a898" stroke-width="1"/><path d="M395,104.5 H401.5" stroke="#b5a898" stroke-width="1"/><path d="M395,107.5 H401.5" stroke="#b5a898" stroke-width="1"/>
<path d="M388.8,100.8 H394.2 L398.2,104.8 V113.1 Q398.2,115.1 396.2,115.1 H388.8 Q386.8,115.1 386.8,113.1 V102.8 Q386.8,100.8 388.8,100.8 Z" fill="#fff" stroke="#f5a623" stroke-width="1.2" stroke-linejoin="round"/><path d="M394.02,100.2 L398.8,104.98 Q393.71999999999997,105.28 394.02,100.2 Z" fill="#f5a623"/>
<path d="M389,105.5 H391.5" stroke="#f5a623" stroke-width="1.1"/><path d="M389,108.5 H396" stroke="#f5a623" stroke-width="1.1"/><path d="M389,111.5 H396" stroke="#f5a623" stroke-width="1.1"/>
<path d="M384.70000000000005,122.8 H388.40000000000003 L391.90000000000003,126.3 V135.0 Q391.90000000000003,137.0 389.90000000000003,137.0 H384.70000000000005 Q382.70000000000005,137.0 382.70000000000005,135.0 V124.8 Q382.70000000000005,122.8 384.70000000000005,122.8 Z" fill="#fff" stroke="#7d6e5e" stroke-width="1.2" stroke-linejoin="round"/><path d="M388.22,122.2 L392.50000000000006,126.48 Q387.98,126.72 388.22,122.2 Z" fill="#6b5d4f"/>
<path d="M384.5,127 H387" stroke="#a39585" stroke-width="1.1"/><path d="M384.5,130 H389.5" stroke="#a39585" stroke-width="1.1"/><path d="M384.5,133 H389.5" stroke="#a39585" stroke-width="1.1"/>
<path d="M393.0,128.9 H397.5 L401.5,132.9 V140.9 Q401.5,142.9 399.5,142.9 H393.0 Q391.0,142.9 391.0,140.9 V130.9 Q391.0,128.9 393.0,128.9 Z" fill="#fff" stroke="#7d6e5e" stroke-width="1.2" stroke-linejoin="round"/><path d="M397.32,128.3 L402.1,133.08 Q397.02,133.38 397.32,128.3 Z" fill="#6b5d4f"/>
<path d="M393,133 H396" stroke="#a39585" stroke-width="1.1"/><path d="M393,136 H399.5" stroke="#a39585" stroke-width="1.1"/><path d="M393,139 H399.5" stroke="#a39585" stroke-width="1.1"/>
<path d="M397,123.8 H400 Q402,123.8 402,126" stroke="#4a9ad8" stroke-width="1.6" fill="none"/><path d="M397.5,121.6 L394.5,123.8 L397.5,126Z" fill="#4a9ad8"/>
<path d="M381.5,139 Q381.5,141 384,141 H386" stroke="#4a9ad8" stroke-width="1.6" fill="none"/><path d="M385.5,138.8 L388.5,141 L385.5,143.2Z" fill="#4a9ad8"/>
<path d="M428.40000000000003,68.8 H446.70000000000005 L457.70000000000005,79.8 V106.6 Q457.70000000000005,108.6 455.70000000000005,108.6 H428.40000000000003 Q426.40000000000003,108.6 426.40000000000003,106.6 V70.8 Q426.40000000000003,68.8 428.40000000000003,68.8 Z" fill="#fff" stroke="#7d6e5e" stroke-width="2.2" stroke-linejoin="round"/><path d="M446.37000000000006,67.7 L458.80000000000007,80.13 Q445.38000000000005,81.12 446.37000000000006,67.7 Z" fill="#6b5d4f"/>
<path d="M433,81 H445" stroke="#a39585" stroke-width="2"/><path d="M433,87 H451" stroke="#a39585" stroke-width="2"/><path d="M433,93 H451" stroke="#a39585" stroke-width="2"/><path d="M433,99 H445" stroke="#a39585" stroke-width="2"/>
<path d="M424,66.5 H447 V70.5 H428 V85 H424 Z" fill="#fff"/>
<path d="M438,111 H466 V94 H458 V104 H438 Z" fill="#f5f5f5"/>
<path d="M447.5,67 L459.5,82 Q449,81 447.5,67 Z" fill="#6b5d4f"/>
<path d="M444,70.5 Q432,65 426.5,76.5" stroke="#5aa0d6" stroke-width="4.8" fill="none"/>
<path d="M419.5,70.5 L421.5,82 L433.5,80 Z" fill="#5aa0d6"/>
<path d="M440,107 Q452,112.5 459,101" stroke="#5aa0d6" stroke-width="4.8" fill="none"/>
<path d="M465,108.5 L462.5,96.5 L450.5,98.5 Z" fill="#5aa0d6"/>
<path d="M476.3,108 V70.5 Q476.3,69.2 477.6,69.2 H501" stroke="#a89a88" stroke-width="2" fill="none"/>
<path d="M480.3,109 V74.5 Q480.3,73.2 481.6,73.2 H505" stroke="#a89a88" stroke-width="2" fill="none"/>
<path d="M486.3,77.19999999999999 H502.7 L511.7,86.19999999999999 V108.29999999999998 Q511.7,110.29999999999998 509.7,110.29999999999998 H486.3 Q484.3,110.29999999999998 484.3,108.29999999999998 V79.19999999999999 Q484.3,77.19999999999999 486.3,77.19999999999999 Z" fill="#fff" stroke="#7d6e5e" stroke-width="2.2" stroke-linejoin="round"/><path d="M502.37,76.1 L512.8,86.52999999999999 Q501.62,87.27999999999999 502.37,76.1 Z" fill="#6b5d4f"/>
<path d="M491.5,87.5 V101 H507 M487.5,92.5 H503 V106 M492,100.5 L506.5,87" stroke="#4a9ad8" stroke-width="1.8" fill="none"/>
<path d="M491,136 H498 L494.5,140 Z" fill="#5a5a5a"/>
<path d="M532.1,69.1 H550.9 L561.9,80.1 V106.6 Q561.9,108.6 559.9,108.6 H532.1 Q530.1,108.6 530.1,106.6 V71.1 Q530.1,69.1 532.1,69.1 Z" fill="#fff" stroke="#7d6e5e" stroke-width="2.2" stroke-linejoin="round"/><path d="M550.5699999999999,68.0 L563.0,80.42999999999999 Q549.5799999999999,81.41999999999999 550.5699999999999,68.0 Z" fill="#6b5d4f"/>
<rect x="527.5" y="90.5" width="20.7" height="20.7" fill="#f5f5f5"/>
<rect x="530" y="93" width="15.7" height="15.7" rx="2" fill="#fff" stroke="#4a9ad8" stroke-width="2.2"/>
<path d="M536.5,102.5 L543,96" stroke="#4a9ad8" stroke-width="2.6"/><path d="M534.8,97.5 V104 H541.3 Z" fill="#4a9ad8"/>
<path d="M547.5,91.5 L553,86" stroke="#4a9ad8" stroke-width="2.6"/><path d="M555.2,84 V90.5 H548.7 Z" fill="#4a9ad8"/>
<path d="M601.3000000000001,69.1 H620.1 L631.1,80.1 V106.6 Q631.1,108.6 629.1,108.6 H601.3000000000001 Q599.3000000000001,108.6 599.3000000000001,106.6 V71.1 Q599.3000000000001,69.1 601.3000000000001,69.1 Z" fill="#fff" stroke="#7d6e5e" stroke-width="2.2" stroke-linejoin="round"/><path d="M619.77,68.0 L632.2,80.42999999999999 Q618.78,81.41999999999999 619.77,68.0 Z" fill="#6b5d4f"/>
<path d="M602.5,101.8 L611,78 H616 L621.5,101.8 H617.5 L615.5,93 H608.5 L605.5,101.8 Z M609.5,89.5 H614.5 L613,82 Z" fill="#ff8a5e"/>
<path d="M604,83 H626" stroke="#a89c8c" stroke-width="2"/><path d="M604,89 H626" stroke="#a89c8c" stroke-width="2"/><path d="M604,95 H626" stroke="#a89c8c" stroke-width="2"/>
<path d="M612.6,136 H619.6 L616.1,140 Z" fill="#5a5a5a"/>
<path d="M669.2,69.1 H688.0 L699.0,80.1 V106.5 Q699.0,108.5 697.0,108.5 H669.2 Q667.2,108.5 667.2,106.5 V71.1 Q667.2,69.1 669.2,69.1 Z" fill="#fff" stroke="#7d6e5e" stroke-width="2.2" stroke-linejoin="round"/><path d="M687.67,68.0 L700.1,80.42999999999999 Q686.68,81.41999999999999 687.67,68.0 Z" fill="#6b5d4f"/>
<path d="M670.5,72.3 H688 Q688.5,77 696,79.5 V105.5 H670.5 Z" fill="#5aa0d6"/>
<path d="M670.5,72.3 H688 Q688.5,77 696,79.5 V88 Q684,93 670.5,86 Z" fill="#8cbde3"/>
<path d="M660,84.5 L671,73.5 L681,83.5 L670,94.5 Z" fill="#f5f5f5"/>
<path d="M662,84.5 L671,75.5 L679,83.5 L670,92.5 Z" fill="#7d6e5e"/>
<path d="M666,88.5 L675,79.5 L679,83.5 L670,92.5 Z" fill="#5f5245"/>
<path d="M666.5,79.5 Q665.5,72.5 671,72.8 Q676,73 675.5,80" stroke="#7d6e5e" stroke-width="1.6" fill="none"/>
<circle cx="675.2" cy="80.5" r="1.2" fill="#fff"/>
<path d="M679.5,80 Q681.5,84 680.5,91" stroke="#2a4f9a" stroke-width="2.2" fill="none"/>
<path d="M680,136 H687 L683.5,140 Z" fill="#5a5a5a"/>
<path d="M725.6,66.5 H734.4 L739.4,71.5 V84.3 Q739.4,86.3 737.4,86.3 H725.6 Q723.6,86.3 723.6,84.3 V68.5 Q723.6,66.5 725.6,66.5 Z" fill="#fff" stroke="#7d6e5e" stroke-width="1.2" stroke-linejoin="round"/><path d="M734.22,65.9 L740.0,71.68 Q733.8,72.1 734.22,65.9 Z" fill="#6b5d4f"/>
<path d="M725,68 H733.5 Q734,71 738,72 V73 H725 Z" fill="#f8ad32"/><rect x="725" y="81" width="13" height="4.2" fill="#f8ad32"/>
<path d="M727,76.4 H736" stroke="#9a8c7c" stroke-width="1"/><path d="M727,79 H736" stroke="#9a8c7c" stroke-width="1"/>
<path d="M852.2,75 H857.2 L854.7,78 Z" fill="#5a5a5a"/>
<path d="M725.6,94.6 H734.4 L739.4,99.6 V112.19999999999999 Q739.4,114.19999999999999 737.4,114.19999999999999 H725.6 Q723.6,114.19999999999999 723.6,112.19999999999999 V96.6 Q723.6,94.6 725.6,94.6 Z" fill="#fff" stroke="#7d6e5e" stroke-width="1.2" stroke-linejoin="round"/><path d="M734.22,94.0 L740.0,99.78 Q733.8,100.19999999999999 734.22,94.0 Z" fill="#6b5d4f"/>
<path d="M727,100.5 H731.5" stroke="#9a8c7c" stroke-width="1"/><path d="M727,103.4 H736" stroke="#9a8c7c" stroke-width="1"/>
<path d="M728.8,106 L728,112 M732,106 L731.2,112 M727,108 H734 M726.6,110.3 H733.6" stroke="#4a9ad8" stroke-width="1" fill="none"/>
<path d="M846.3,103 H851.3 L848.8,106 Z" fill="#5a5a5a"/>
<path d="M724.7,122.5 H733.5 L738.5,127.5 V140.3 Q738.5,142.3 736.5,142.3 H724.7 Q722.7,142.3 722.7,140.3 V124.5 Q722.7,122.5 724.7,122.5 Z" fill="#fff" stroke="#7d6e5e" stroke-width="1.2" stroke-linejoin="round"/><path d="M733.32,121.9 L739.1,127.68 Q732.9,128.1 733.32,121.9 Z" fill="#6b5d4f"/>
<path d="M726,128.4 H731" stroke="#9a8c7c" stroke-width="1"/><path d="M726,131.4 H735" stroke="#9a8c7c" stroke-width="1"/><path d="M726,134.4 H735" stroke="#9a8c7c" stroke-width="1"/>
<text x="724.8" y="141" font-family="Liberation Sans" font-weight="bold" font-size="6.5" fill="#4a9ad8">1.N</text>
</svg><svg style="left:0;top:160px" width="890" height="452" viewBox="0 160 890 452">
<!-- doc tab close x -->
<path d="M86.2,169.2 L93.2,176.2 M93.2,169.2 L86.2,176.2" stroke="#111" stroke-width="1.3"/>
<!-- plus -->
<path d="M103,176 H113 M108,171 V181" stroke="#fff" stroke-width="2.6"/>
<!-- close doc -->
<path d="M872.3,171.3 L882.7,181.7 M882.7,171.3 L872.3,181.7" stroke="#fff" stroke-width="2"/>
<!-- scrollbar -->
<rect x="873.2" y="190" width="13" height="13" rx="2" fill="#fdfdfd" stroke="#bdbdbd" stroke-width="0.8"/>
<path d="M876.2,198 L879.7,194 L883.2,198 Z" fill="#5a5a5a"/>
<rect x="873.2" y="205" width="13" height="12.3" rx="2" fill="#f8f8f8" stroke="#b5b5b5" stroke-width="0.8"/>
<path d="M876.3,208.5 H883 M876.3,211 H883 M876.3,213.5 H883" stroke="#6a6a6a" stroke-width="0.8"/>
<rect x="873.2" y="564" width="13" height="13" rx="2" fill="#fdfdfd" stroke="#bdbdbd" stroke-width="0.8"/>
<path d="M876.2,569 L879.7,573 L883.2,569 Z" fill="#5a5a5a"/>
<!-- status: grip -->
<g id="grip">
<g fill="#c2c2c2">
<rect x="5" y="582" width="1" height="1"/><rect x="7" y="582" width="1" height="1"/><rect x="9" y="582" width="1" height="1"/><rect x="11" y="582" width="1" height="1"/>
<rect x="5" y="584" width="1" height="1"/><rect x="7" y="584" width="1" height="1"/><rect x="9" y="584" width="1" height="1"/><rect x="11" y="584" width="1" height="1"/>
<rect x="5" y="586" width="1" height="1"/><rect x="7" y="586" width="1" height="1"/><rect x="9" y="586" width="1" height="1"/><rect x="11" y="586" width="1" height="1"/>
<rect x="5" y="588" width="1" height="1"/><rect x="7" y="588" width="1" height="1"/><rect x="9" y="588" width="1" height="1"/><rect x="11" y="588" width="1" height="1"/>
<rect x="5" y="590" width="1" height="1"/><rect x="7" y="590" width="1" height="1"/><rect x="9" y="590" width="1" height="1"/><rect x="11" y="590" width="1" height="1"/>
<rect x="5" y="592" width="1" height="1"/><rect x="7" y="592" width="1" height="1"/><rect x="9" y="592" width="1" height="1"/><rect x="11" y="592" width="1" height="1"/>
<rect x="5" y="594" width="1" height="1"/><rect x="7" y="594" width="1" height="1"/><rect x="9" y="594" width="1" height="1"/><rect x="11" y="594" width="1" height="1"/>
<rect x="5" y="596" width="1" height="1"/><rect x="7" y="596" width="1" height="1"/><rect x="9" y="596" width="1" height="1"/><rect x="11" y="596" width="1" height="1"/>
</g>
<path d="M5.5,599 V605.5" stroke="#777" stroke-width="1"/>
<path d="M11,599 L6.8,602.2 L11,605.5 Z" fill="#777"/>
</g>
<use href="#grip" transform="translate(228,0)"/>
<use href="#grip" transform="translate(489,0)"/>
<use href="#grip" transform="translate(595,0)"/>
<use href="#grip" transform="translate(840,0)"/>
<!-- gears -->
<path d="M27.27,588.39 L29.79,588.23 L29.79,590.77 L27.27,590.61 L26.66,592.09 L28.55,593.76 L26.76,595.55 L25.09,593.66 L23.61,594.27 L23.77,596.79 L21.23,596.79 L21.39,594.27 L19.91,593.66 L18.24,595.55 L16.45,593.76 L18.34,592.09 L17.73,590.61 L15.21,590.77 L15.21,588.23 L17.73,588.39 L18.34,586.91 L16.45,585.24 L18.24,583.45 L19.91,585.34 L21.39,584.73 L21.23,582.21 L23.77,582.21 L23.61,584.73 L25.09,585.34 L26.76,583.45 L28.55,585.24 L26.66,586.91 Z M24.9,589.5 A2.4,2.4 0 1 0 20.1,589.5 A2.4,2.4 0 1 0 24.9,589.5 Z" fill="#8d8171" fill-rule="evenodd"/>
<circle cx="31.3" cy="598.5" r="7.6" fill="#f3f3f3"/>
<path d="M35.54,599.21 L37.74,599.94 L36.87,602.04 L34.80,601.00 L33.80,602.00 L34.84,604.07 L32.74,604.94 L32.01,602.74 L30.59,602.74 L29.86,604.94 L27.76,604.07 L28.80,602.00 L27.80,601.00 L25.73,602.04 L24.86,599.94 L27.06,599.21 L27.06,597.79 L24.86,597.06 L25.73,594.96 L27.80,596.00 L28.80,595.00 L27.76,592.93 L29.86,592.06 L30.59,594.26 L32.01,594.26 L32.74,592.06 L34.84,592.93 L33.80,595.00 L34.80,596.00 L36.87,594.96 L37.74,597.06 L35.54,597.79 Z M33.4,598.5 A2.1,2.1 0 1 0 29.2,598.5 A2.1,2.1 0 1 0 33.4,598.5 Z" fill="#f7a82c" fill-rule="evenodd"/>
<path d="M44.5,592 H50 L47.25,595 Z" fill="#333"/>
<rect x="56.5" y="582" width="1" height="24" fill="#dadada"/>
<g id="chev"><path d="M63,589 L66.5,592.5 L70,589 M63,594 L66.5,597.5 L70,594" stroke="#5a5a5a" stroke-width="1.8" fill="none"/></g>
<use href="#chev" transform="translate(420,0)"/>
<use href="#chev" transform="translate(526,0)"/>
<use href="#chev" transform="translate(771,0)"/>
<use href="#chev" transform="translate(804,0)"/>
<!-- nav circles -->
<circle cx="255" cy="595" r="10.3" fill="none" stroke="#c3bcb4" stroke-width="1.2"/>
<path d="M251.5,590.5 V599.5 M258.5,590.5 L254,595 L258.5,599.5" stroke="#9fcdee" stroke-width="1.8" fill="none"/>
<circle cx="283" cy="595" r="10.3" fill="none" stroke="#c3bcb4" stroke-width="1.2"/>
<path d="M285,590.5 L280.5,595 L285,599.5" stroke="#9fcdee" stroke-width="1.8" fill="none"/>
<rect x="298.6" y="582.8" width="89" height="21" rx="3" fill="#fff" stroke="#a8a8a8" stroke-width="1"/>
<path d="M366,590.2 L368.4,588.8 V598" stroke="#1a1a1a" stroke-width="1.4" fill="none"/>
<path d="M373.4,600.4 L377.2,587.4" stroke="#666" stroke-width="1"/>
<circle cx="403" cy="595" r="10.3" fill="none" stroke="#857565" stroke-width="1.2"/>
<path d="M401,590.5 L405.5,595 L401,599.5" stroke="#3d96d8" stroke-width="1.8" fill="none"/>
<circle cx="431" cy="595" r="10.3" fill="none" stroke="#857565" stroke-width="1.2"/>
<path d="M434.5,590.5 V599.5 M427.5,590.5 L432,595 L427.5,599.5" stroke="#3d96d8" stroke-width="1.8" fill="none"/>
<rect x="448.5" y="582" width="1" height="24" fill="#dadada"/>
<circle cx="466" cy="594" r="10.5" fill="none" stroke="#857565" stroke-width="1.2"/>
<path d="M460.5,594 H472 M465,589 L460.5,594 L465,599" stroke="#6aab2b" stroke-width="2.2" fill="none" stroke-linecap="round" stroke-linejoin="round"/>
<!-- page layout icons -->
<path d="M508.5,583.5 H520 L523.5,587.5 V602.5 Q523.5,603 523,603 H509 Q508.5,603 508.5,602.5 Z" fill="#fff" stroke="#857565" stroke-width="1.1"/>
<path d="M519.5,583.2 L523.8,588 Q520,587.5 519.8,585Z" fill="#6b5d4f"/>
<rect x="530.5" y="580.5" width="27" height="27" rx="2.5" fill="url(#hl)" stroke="#b39a58" stroke-width="1"/>
<defs><linearGradient id="hl" x1="0" y1="0" x2="0" y2="1"><stop offset="0" stop-color="#fbeec2"/><stop offset=".5" stop-color="#f7dc92"/><stop offset="1" stop-color="#fde8a8"/></linearGradient></defs>
<path d="M536,583.5 H552 V593 H536 Z" fill="#fff" stroke="#6b5d4f" stroke-width="1.1"/>
<path d="M536,596 H548.5 L552,599.5 V603.5 H536 Z" fill="#fff" stroke="#6b5d4f" stroke-width="1.1"/>
<path d="M548,595.6 L552.4,600 Q548.6,599.8 548.3,597.5Z" fill="#6b5d4f"/>
<path d="M560,587 H568 L570.5,589.8 V600.5 H560 Z" fill="#fff" stroke="#857565" stroke-width="1.1"/>
<path d="M567.6,586.7 L570.8,590 Q568,589.8 567.8,588Z" fill="#6b5d4f"/>
<path d="M573.5,587 H581.5 L584,589.8 V600.5 H573.5 Z" fill="#fff" stroke="#857565" stroke-width="1.1"/>
<path d="M581.1,586.7 L584.3,590 Q581.5,589.8 581.3,588Z" fill="#6b5d4f"/>
<!-- zoom box -->
<rect x="610" y="582.5" width="80.3" height="21.7" rx="3" fill="#fff" stroke="#a8a8a8" stroke-width="1"/>
<path d="M679.2,592 H686.3 L682.75,595.5 Z" fill="#555"/>
<rect x="696" y="582" width="1" height="24" fill="#dadada"/>
<circle cx="712.8" cy="594" r="10.5" fill="#fdf0d0" stroke="#857565" stroke-width="1.2"/>
<path d="M705.5,600 A10.5,10.5 0 0 1 719.5,586 L705.5,600Z" fill="#fff" opacity=".5"/>
<path d="M706.5,594 H719" stroke="#4a9ad8" stroke-width="1.8"/>
<path d="M729.4,594.5 H829" stroke="#8a8a8a" stroke-width="1"/>
<rect x="775.5" y="582.9" width="6" height="22" rx="2" fill="#fbfbfb" stroke="#6a6a6a" stroke-width="1"/>
<path d="M877.6,580.3 L881.5,584.3 L885.4,580.3 Z M877.6,585.8 H885.4" stroke="#5a5a5a" stroke-width="1" fill="#5a5a5a"/>
</svg>

<div class="t" style="left:364.0px;top:10.0px;color:#1e1e1e;font-size:12px;line-height:12px;transform:scaleX(0.980)">Architecture - PDF-XChang..</div>
<div class="t" style="left:522.0px;top:10.0px;color:#8c8c8c;font-size:12px;line-height:12px;transform:scaleX(0.976)">Quick Launch (CTRL+.)</div>
<div class="t" style="left:18.6px;top:40.0px;color:#ffffff;font-size:12px;line-height:12px;transform:scaleX(0.972)">File</div>
<div class="t" style="left:67.3px;top:40.0px;color:#151515;font-size:12px;line-height:12px;transform:scaleX(1.061)">Home</div>
<div class="t" style="left:119.0px;top:40.0px;color:#151515;font-size:12px;line-height:12px;transform:scaleX(0.962)">View</div>
<div class="t" style="left:162.5px;top:40.0px;color:#151515;font-size:12px;line-height:12px;transform:scaleX(1.029)">Comment</div>
<div class="t" style="left:233.0px;top:40.0px;color:#151515;font-size:12px;line-height:12px;transform:scaleX(1.027)">Protect</div>
<div class="t" style="left:289.0px;top:40.0px;color:#151515;font-size:12px;line-height:12px;transform:scaleX(1.038)">Form</div>
<div class="t" style="left:336.0px;top:40.0px;color:#1f4a8a;font-size:12px;line-height:12px;transform:scaleX(0.979)">Organize</div>
<div class="t" style="left:401.0px;top:40.0px;color:#151515;font-size:12px;line-height:12px;transform:scaleX(0.976)">Convert</div>
<div class="t" style="left:460.1px;top:40.0px;color:#151515;font-size:12px;line-height:12px;transform:scaleX(0.935)">Share</div>
<div class="t" style="left:507.6px;top:40.0px;color:#151515;font-size:12px;line-height:12px;transform:scaleX(0.936)">Review</div>
<div class="t" style="left:562.0px;top:40.0px;color:#151515;font-size:12px;line-height:12px;transform:scaleX(0.995)">Bookmarks</div>
<div class="t" style="left:638.9px;top:40.0px;color:#151515;font-size:12px;line-height:12px;transform:scaleX(1.065)">Help</div>
<div class="t" style="left:693.0px;top:40.0px;color:#151515;font-size:12px;line-height:12px;transform:scaleX(1.027)">Format</div>
<div class="t" style="left:790.0px;top:40.0px;color:#151515;font-size:12px;line-height:12px;transform:scaleX(1.032)">Find...</div>
<div class="t" style="left:30.7px;top:71.1px;color:#151515;font-size:12px;line-height:12px;transform:scaleX(1.019)">Hand</div>
<div class="t" style="left:30.4px;top:98.8px;color:#151515;font-size:12px;line-height:12px;transform:scaleX(0.943)">Select Text</div>
<div class="t" style="left:31.4px;top:127.0px;color:#151515;font-size:12px;line-height:12px;transform:scaleX(0.977)">Other Tools</div>
<div class="t" style="left:41.0px;top:149.5px;color:#716d7d;font-size:12px;line-height:12px;transform:scaleX(0.943)">Tools</div>
<div class="t" style="left:126.5px;top:118.9px;color:#151515;font-size:12px;line-height:12px;transform:scaleX(0.976)">Insert</div>
<div class="t" style="left:177.0px;top:118.9px;color:#151515;font-size:12px;line-height:12px;transform:scaleX(0.970)">Delete</div>
<div class="t" style="left:234.6px;top:118.9px;color:#151515;font-size:12px;line-height:12px;transform:scaleX(0.983)">Extract</div>
<div class="t" style="left:236.8px;top:132.4px;color:#151515;font-size:12px;line-height:12px;transform:scaleX(0.912)">Pages</div>
<div class="t" style="left:247.0px;top:149.5px;color:#716d7d;font-size:12px;line-height:12px;transform:scaleX(0.897)">Pages</div>
<div class="t" style="left:307.4px;top:71.3px;color:#151515;font-size:12px;line-height:12px;transform:scaleX(0.964)">Move Pages</div>
<div class="t" style="left:307.4px;top:99.3px;color:#151515;font-size:12px;line-height:12px;transform:scaleX(0.966)">Merge Pages</div>
<div class="t" style="left:307.4px;top:127.3px;color:#151515;font-size:12px;line-height:12px;transform:scaleX(1.036)">Split</div>
<div class="t" style="left:425.0px;top:118.9px;color:#151515;font-size:12px;line-height:12px">Rotate</div>
<div class="t" style="left:482.6px;top:118.9px;color:#151515;font-size:12px;line-height:12px;transform:scaleX(0.954)">Crop</div>
<div class="t" style="left:530.4px;top:118.9px;color:#151515;font-size:12px;line-height:12px;transform:scaleX(0.900)">Resize</div>
<div class="t" style="left:453.0px;top:149.5px;color:#716d7d;font-size:12px;line-height:12px;transform:scaleX(0.918)">Transform Pages</div>
<div class="t" style="left:585.5px;top:118.9px;color:#151515;font-size:12px;line-height:12px;transform:scaleX(0.969)">Watermarks</div>
<div class="t" style="left:651.4px;top:118.9px;color:#151515;font-size:12px;line-height:12px;transform:scaleX(1.021)">Background</div>
<div class="t" style="left:746.4px;top:71.1px;color:#151515;font-size:12px;line-height:12px;transform:scaleX(0.974)">Header and Footer</div>
<div class="t" style="left:746.4px;top:98.9px;color:#151515;font-size:12px;line-height:12px;transform:scaleX(1.005)">Bates Numbering</div>
<div class="t" style="left:746.4px;top:126.9px;color:#151515;font-size:12px;line-height:12px;transform:scaleX(0.978)">Number Pages</div>
<div class="t" style="left:691.6px;top:149.5px;color:#716d7d;font-size:12px;line-height:12px;transform:scaleX(0.919)">Page Marks</div>
<div class="t" style="left:8.0px;top:170.6px;color:#1a1a1a;font-size:12px;line-height:12px;transform:scaleX(1.019)">Architecture</div>
<div class="t" style="left:612.8px;top:588.0px;color:#111;font-size:12px;line-height:12px;transform:scaleX(0.931)">100%</div>
<div class="t" style="left:379.0px;top:586.1px;color:#555;font-size:9.5px;line-height:9.5px;transform:scaleX(1.020)">9</div>
<div class="a" style="left:278px;top:146px;width:147px;height:65px;background:#f8f8f8;border:1px solid #6e6e6e;border-radius:3px;box-shadow:1px 2px 3px rgba(0,0,0,.3)"></div>
<svg style="left:0;top:0" width="890" height="220" viewBox="0 0 890 220"><rect x="281.8" y="149.8" width="138.4" height="30.4" fill="none" stroke="#e8141c" stroke-width="1.6"/></svg>
<div class="a" style="left:283px;top:151px;width:136px;height:28px;border:1px solid #d6bf80;border-radius:3px;background:linear-gradient(#fdf4d6,#fae3a0 50%,#f9dc8c 60%,#fcebb6)"></div>
<svg style="left:0;top:0" width="890" height="220" viewBox="0 0 890 220">
<path d="M301.5,154.6 H313.5 L317.4,158.8 V161.8 L315.8,164.3 L317.4,166.8 V170 L313.5,174 H301.5 V154.6 Z" fill="#fff" stroke="#6b5d4f" stroke-width="1.2"/>
<path d="M313,154.2 L317.8,159 Q314.2,158.8 313.4,156Z M313,174.4 L317.8,169.6 Q314.2,169.8 313.4,172.6Z" fill="#6b5d4f"/>
<path d="M301.5,164.3 H316" stroke="#f0c890" stroke-width="1.2"/>
<path d="M307,159.5 V168 M312,160.5 V169" stroke="#4a9ad8" stroke-width="1.6"/>
<path d="M304.8,166.6 H309.2 L307,169.6Z M309.8,161.6 H314.2 L312,158.6Z" fill="#4a9ad8"/>
<path d="M301.5,182.6 H313.5 L317.4,186.8 V201.4 Q317.4,202 316.8,202 H302.1 Q301.5,202 301.5,201.4 V183.2 Q301.5,182.6 302.1,182.6 Z" fill="#fff" stroke="#6b5d4f" stroke-width="1.2"/>
<path d="M313,182.2 L317.8,187 Q314.2,186.8 313.4,184Z" fill="#6b5d4f"/>
<path d="M305,182 V184.5 M305,200 V202.6 M314,200 V202.6" stroke="#f8f8f8" stroke-width="0" />
<path d="M309.7,181.8 V203" stroke="#f8f8f8" stroke-width="3"/>
<path d="M300.8,192.3 H318" stroke="#f8f8f8" stroke-width="3"/>
<path d="M309.7,182.5 V202.5" stroke="#4a9ad8" stroke-width="1" stroke-dasharray="1.8 1.3"/>
<path d="M301,192.3 H318" stroke="#4a9ad8" stroke-width="1" stroke-dasharray="1.8 1.3"/>
</svg>

<div class="t" style="left:323.8px;top:158.8px;color:#151515;font-size:12px;line-height:12px;transform:scaleX(1.020)">Split Document...</div>
<div class="t" style="left:323.8px;top:186.6px;color:#151515;font-size:12px;line-height:12px;transform:scaleX(0.951)">Split Pages...</div>
</body></html>
